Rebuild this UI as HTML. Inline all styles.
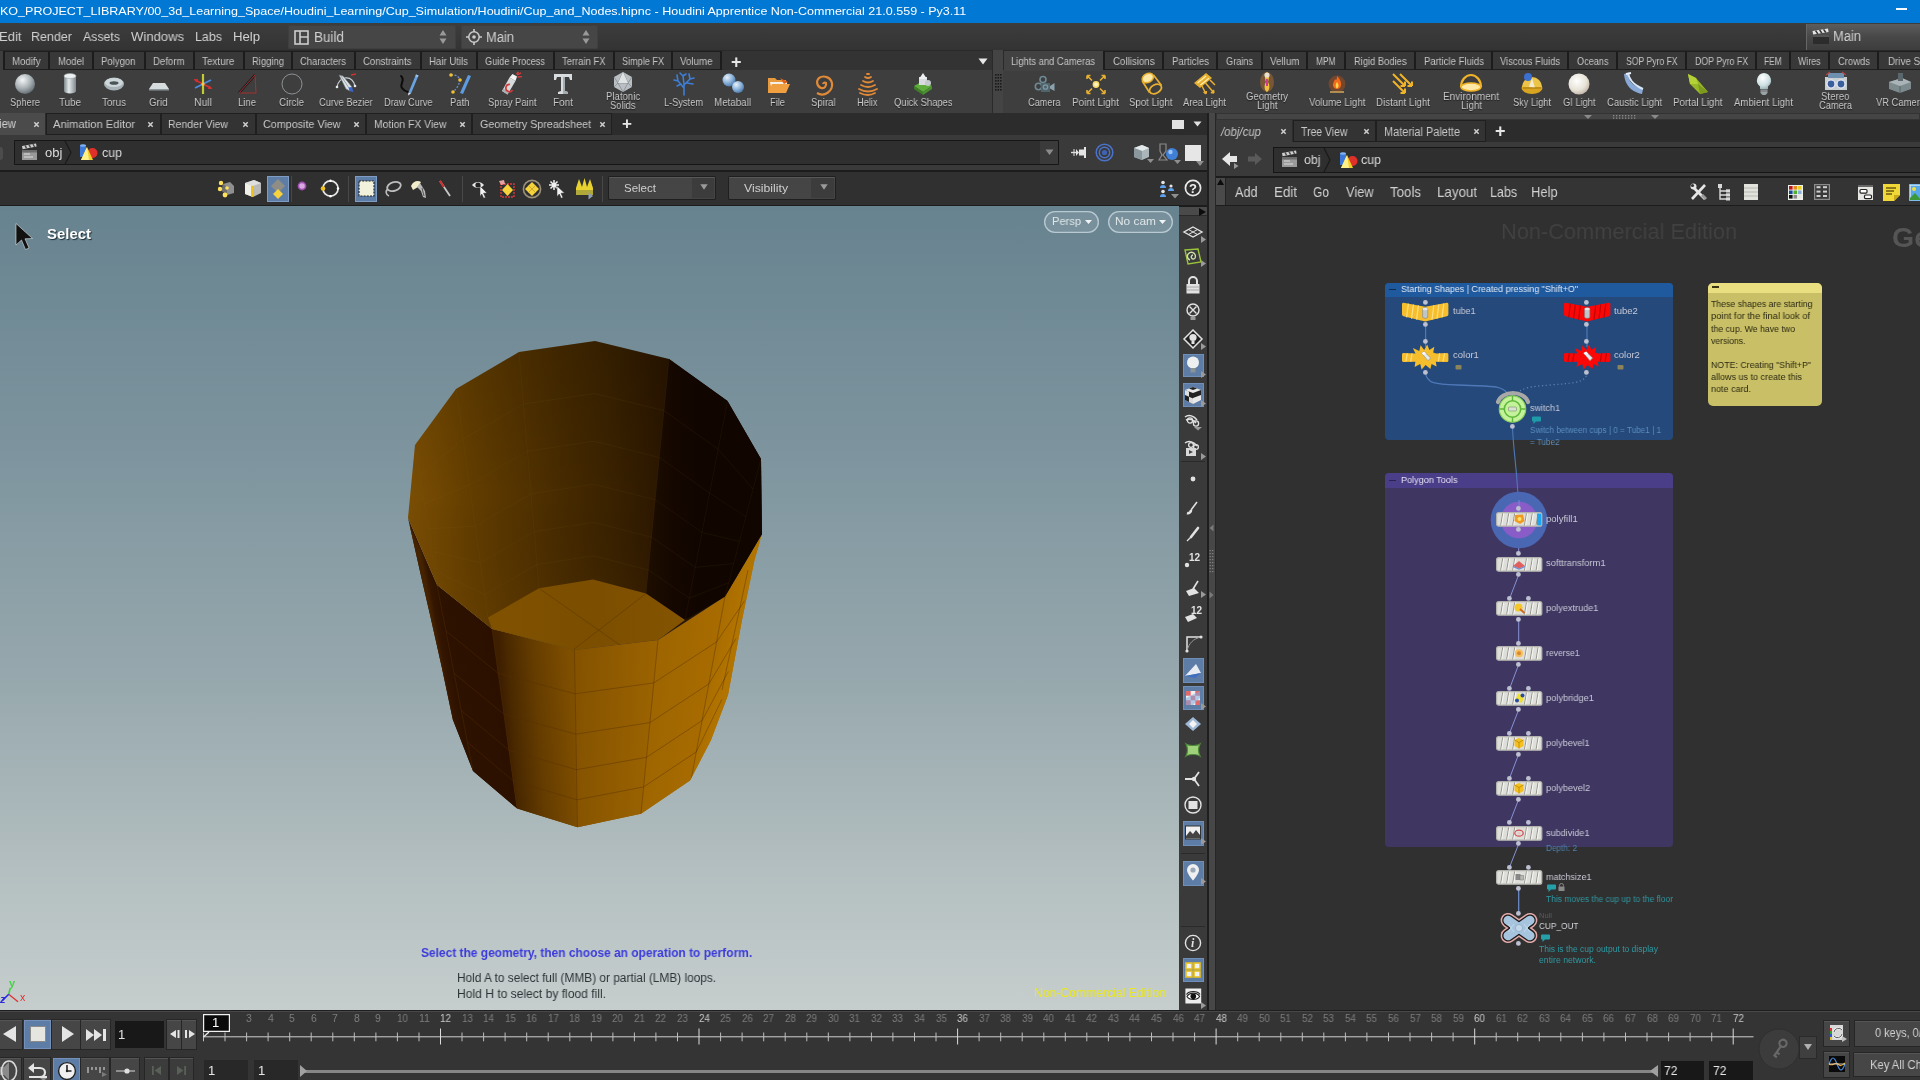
<!DOCTYPE html>
<html><head><meta charset="utf-8"><title>Houdini</title>
<style>
html,body{margin:0;padding:0;background:#2f2f2f;}
body{width:1920px;height:1080px;position:relative;overflow:hidden;font-family:"Liberation Sans",sans-serif;}
.r{position:absolute;display:block;}
svg.r{overflow:visible;}
.t{position:absolute;white-space:nowrap;transform-origin:0 50%;will-change:transform;}
</style></head><body>
<!-- top -->
<div class="r" style="left:0px;top:0px;width:1920px;height:23px;background:#0078d4;"></div>
<span class="t" style="left:0.0px;top:4.5px;font-size:11.2px;line-height:13px;color:#fff;transform:scaleX(1.120);">KO_PROJECT_LIBRARY/00_3d_Learning_Space/Houdini_Learning/Cup_Simulation/Houdini/Cup_and_Nodes.hipnc - Houdini Apprentice Non-Commercial 21.0.559 - Py3.11</span>
<div class="r" style="left:1896px;top:8px;width:11px;height:1.6px;background:#f4faff;"></div>
<div class="r" style="left:0px;top:23px;width:1920px;height:27px;background:linear-gradient(180deg,#3d3d3d,#333333);"></div>
<span class="t" style="left:-1.5px;top:29.0px;font-size:13.2px;line-height:16px;color:#d0d0d0;transform:scaleX(0.989);">Edit</span>
<span class="t" style="left:31.0px;top:29.0px;font-size:13.2px;line-height:16px;color:#d0d0d0;transform:scaleX(0.947);">Render</span>
<span class="t" style="left:83.0px;top:29.0px;font-size:13.2px;line-height:16px;color:#d0d0d0;transform:scaleX(0.934);">Assets</span>
<span class="t" style="left:131.0px;top:29.0px;font-size:13.2px;line-height:16px;color:#d0d0d0;transform:scaleX(0.990);">Windows</span>
<span class="t" style="left:195.0px;top:29.0px;font-size:13.2px;line-height:16px;color:#d0d0d0;transform:scaleX(0.943);">Labs</span>
<span class="t" style="left:233.0px;top:29.0px;font-size:13.2px;line-height:16px;color:#d0d0d0;transform:scaleX(0.995);">Help</span>
<div class="r" style="left:288px;top:25px;width:168px;height:24px;background:#464646;border-radius:2px;box-shadow:inset 0 0 0 1px #3f3f3f;"></div>
<svg class="r" style="left:294px;top:30px;" width="15" height="15" viewBox="0 0 15 15"><rect x="1" y="1" width="13" height="13" fill="none" stroke="#ccc" stroke-width="1.6"/><path d="M6 1V14M6 7H14" stroke="#ccc" stroke-width="1.6" fill="none"/></svg>
<span class="t" style="left:314.0px;top:28.5px;font-size:14px;line-height:17px;color:#d0d0d0;transform:scaleX(0.964);">Build</span>
<svg class="r" style="left:439px;top:29px;" width="8" height="16" viewBox="0 0 8 16"><path d="M4 1L7.5 6.5H0.5Z M4 15L7.5 9.5H0.5Z" fill="#999"/></svg>
<div class="r" style="left:461px;top:25px;width:137px;height:24px;background:#464646;border-radius:2px;box-shadow:inset 0 0 0 1px #3f3f3f;"></div>
<svg class="r" style="left:466px;top:29px;" width="16" height="16" viewBox="0 0 16 16"><circle cx="8" cy="8" r="5.2" fill="none" stroke="#ccc" stroke-width="1.5"/><circle cx="8" cy="8" r="1.8" fill="#ccc"/><path d="M8 0V3M8 13V16M0 8H3M13 8H16" stroke="#ccc" stroke-width="1.6"/></svg>
<span class="t" style="left:486.0px;top:28.5px;font-size:14px;line-height:17px;color:#d0d0d0;transform:scaleX(0.923);">Main</span>
<svg class="r" style="left:582px;top:29px;" width="8" height="16" viewBox="0 0 8 16"><path d="M4 1L7.5 6.5H0.5Z M4 15L7.5 9.5H0.5Z" fill="#999"/></svg>
<div class="r" style="left:1806px;top:23.5px;width:114px;height:26px;background:linear-gradient(180deg,#5c5c5c,#484848 50%,#3d3d3d);box-shadow:inset 1px 0 0 #666;"></div>
<svg class="r" style="left:1812px;top:28px;" width="18" height="16" viewBox="0 0 18 16"><path d="M1 7H17V16H1Z" fill="#2c2c2c"/><path d="M1 7H17V9H1Z" fill="#555"/><path d="M0.5 3L16 0.5L16.6 4L1.2 6.5Z" fill="#e4e4e4"/><path d="M3.6 2.6L5.8 5.8M7.6 2L9.8 5.2M11.6 1.3L13.8 4.5" stroke="#333" stroke-width="1.5"/></svg>
<span class="t" style="left:1833.0px;top:27.5px;font-size:14px;line-height:17px;color:#d0d0d0;transform:scaleX(0.923);">Main</span>
<div class="r" style="left:0px;top:50px;width:1920px;height:21px;background:#2a2a2a;"></div>
<div class="r" style="left:0px;top:70px;width:1920px;height:43px;background:#3e3e3e;"></div>
<div class="r" style="left:0px;top:51px;width:3px;height:19px;background:#3e3e3e;"></div>
<div class="r" style="left:5px;top:51px;width:716px;height:19px;background:#383838;box-shadow:inset 0 1px 0 #1e1e1e, inset 0 -1px 0 #1e1e1e;"></div>
<div class="r" style="left:3.2px;top:51px;width:1.6px;height:19px;background:#1c1c1c;"></div>
<span class="t" style="left:12.2px;top:54.5px;font-size:10.5px;line-height:13px;color:#c4c4c4;transform:scaleX(0.922);">Modify</span>
<div class="r" style="left:48.2px;top:51px;width:1.6px;height:19px;background:#1c1c1c;"></div>
<span class="t" style="left:57.5px;top:54.5px;font-size:10.5px;line-height:13px;color:#c4c4c4;transform:scaleX(0.909);">Model</span>
<div class="r" style="left:92.2px;top:51px;width:1.6px;height:19px;background:#1c1c1c;"></div>
<span class="t" style="left:101.2px;top:54.5px;font-size:10.5px;line-height:13px;color:#c4c4c4;transform:scaleX(0.909);">Polygon</span>
<div class="r" style="left:144.2px;top:51px;width:1.6px;height:19px;background:#1c1c1c;"></div>
<span class="t" style="left:153.2px;top:54.5px;font-size:10.5px;line-height:13px;color:#c4c4c4;transform:scaleX(0.915);">Deform</span>
<div class="r" style="left:193.2px;top:51px;width:1.6px;height:19px;background:#1c1c1c;"></div>
<span class="t" style="left:201.6px;top:54.5px;font-size:10.5px;line-height:13px;color:#c4c4c4;transform:scaleX(0.944);">Texture</span>
<div class="r" style="left:243.2px;top:51px;width:1.6px;height:19px;background:#1c1c1c;"></div>
<span class="t" style="left:251.5px;top:54.5px;font-size:10.5px;line-height:13px;color:#c4c4c4;transform:scaleX(0.899);">Rigging</span>
<div class="r" style="left:291.2px;top:51px;width:1.6px;height:19px;background:#1c1c1c;"></div>
<span class="t" style="left:300.0px;top:54.5px;font-size:10.5px;line-height:13px;color:#c4c4c4;transform:scaleX(0.896);">Characters</span>
<div class="r" style="left:354.2px;top:51px;width:1.6px;height:19px;background:#1c1c1c;"></div>
<span class="t" style="left:363.2px;top:54.5px;font-size:10.5px;line-height:13px;color:#c4c4c4;transform:scaleX(0.913);">Constraints</span>
<div class="r" style="left:420.2px;top:51px;width:1.6px;height:19px;background:#1c1c1c;"></div>
<span class="t" style="left:429.0px;top:54.5px;font-size:10.5px;line-height:13px;color:#c4c4c4;transform:scaleX(0.916);">Hair Utils</span>
<div class="r" style="left:476.2px;top:51px;width:1.6px;height:19px;background:#1c1c1c;"></div>
<span class="t" style="left:485.0px;top:54.5px;font-size:10.5px;line-height:13px;color:#c4c4c4;transform:scaleX(0.871);">Guide Process</span>
<div class="r" style="left:553.2px;top:51px;width:1.6px;height:19px;background:#1c1c1c;"></div>
<span class="t" style="left:562.0px;top:54.5px;font-size:10.5px;line-height:13px;color:#c4c4c4;transform:scaleX(0.898);">Terrain FX</span>
<div class="r" style="left:613.2px;top:51px;width:1.6px;height:19px;background:#1c1c1c;"></div>
<span class="t" style="left:621.5px;top:54.5px;font-size:10.5px;line-height:13px;color:#c4c4c4;transform:scaleX(0.867);">Simple FX</span>
<div class="r" style="left:671.2px;top:51px;width:1.6px;height:19px;background:#1c1c1c;"></div>
<span class="t" style="left:680.2px;top:54.5px;font-size:10.5px;line-height:13px;color:#c4c4c4;transform:scaleX(0.928);">Volume</span>
<div class="r" style="left:720.2px;top:51px;width:1.6px;height:19px;background:#1c1c1c;"></div>
<span class="t" style="left:731.3px;top:51.5px;font-size:16px;line-height:19px;color:#ddd;font-weight:bold;">+</span>
<div class="r" style="left:722px;top:51px;width:270px;height:19px;background:#333;"></div>
<span class="t" style="left:730.7px;top:50.5px;font-size:18px;line-height:22px;color:#e6e6e6;font-weight:bold;">+</span>
<svg class="r" style="left:978px;top:58px;" width="10" height="7" viewBox="0 0 10 7"><path d="M0.5 0.5H9.5L5 6.5Z" fill="#e8e8e8"/></svg>
<div class="r" style="left:992px;top:50px;width:11px;height:63px;background:#444;"></div>
<div class="r" style="left:992px;top:50px;width:1px;height:63px;background:#2a2a2a;"></div>
<svg class="r" style="left:995px;top:74px;" width="7" height="17" viewBox="0 0 7 17"><rect x="0" y="0" width="1.6" height="1.6" fill="#1a1a1a"/><rect x="0" y="3" width="1.6" height="1.6" fill="#1a1a1a"/><rect x="0" y="6" width="1.6" height="1.6" fill="#1a1a1a"/><rect x="0" y="9" width="1.6" height="1.6" fill="#1a1a1a"/><rect x="0" y="12" width="1.6" height="1.6" fill="#1a1a1a"/><rect x="0" y="15" width="1.6" height="1.6" fill="#1a1a1a"/><rect x="2.5" y="0" width="1.6" height="1.6" fill="#1a1a1a"/><rect x="2.5" y="3" width="1.6" height="1.6" fill="#1a1a1a"/><rect x="2.5" y="6" width="1.6" height="1.6" fill="#1a1a1a"/><rect x="2.5" y="9" width="1.6" height="1.6" fill="#1a1a1a"/><rect x="2.5" y="12" width="1.6" height="1.6" fill="#1a1a1a"/><rect x="2.5" y="15" width="1.6" height="1.6" fill="#1a1a1a"/><rect x="5" y="0" width="1.6" height="1.6" fill="#1a1a1a"/><rect x="5" y="3" width="1.6" height="1.6" fill="#1a1a1a"/><rect x="5" y="6" width="1.6" height="1.6" fill="#1a1a1a"/><rect x="5" y="9" width="1.6" height="1.6" fill="#1a1a1a"/><rect x="5" y="12" width="1.6" height="1.6" fill="#1a1a1a"/><rect x="5" y="15" width="1.6" height="1.6" fill="#1a1a1a"/></svg>
<div class="r" style="left:1103px;top:51px;width:817px;height:19px;background:#383838;box-shadow:inset 0 1px 0 #1e1e1e, inset 0 -1px 0 #1e1e1e;"></div>
<div class="r" style="left:1004px;top:51px;width:99px;height:20px;background:#424242;"></div>
<span class="t" style="left:1010.5px;top:54.5px;font-size:10.5px;line-height:13px;color:#c4c4c4;transform:scaleX(0.894);">Lights and Cameras</span>
<div class="r" style="left:1103.2px;top:51px;width:1.6px;height:19px;background:#1c1c1c;"></div>
<span class="t" style="left:1112.8px;top:54.5px;font-size:10.5px;line-height:13px;color:#c4c4c4;transform:scaleX(0.924);">Collisions</span>
<div class="r" style="left:1162.2px;top:51px;width:1.6px;height:19px;background:#1c1c1c;"></div>
<span class="t" style="left:1171.5px;top:54.5px;font-size:10.5px;line-height:13px;color:#c4c4c4;transform:scaleX(0.919);">Particles</span>
<div class="r" style="left:1216.2px;top:51px;width:1.6px;height:19px;background:#1c1c1c;"></div>
<span class="t" style="left:1226.0px;top:54.5px;font-size:10.5px;line-height:13px;color:#c4c4c4;transform:scaleX(0.873);">Grains</span>
<div class="r" style="left:1261.2px;top:51px;width:1.6px;height:19px;background:#1c1c1c;"></div>
<span class="t" style="left:1269.8px;top:54.5px;font-size:10.5px;line-height:13px;color:#c4c4c4;transform:scaleX(0.936);">Vellum</span>
<div class="r" style="left:1306.2px;top:51px;width:1.6px;height:19px;background:#1c1c1c;"></div>
<span class="t" style="left:1316.2px;top:54.5px;font-size:10.5px;line-height:13px;color:#c4c4c4;transform:scaleX(0.796);">MPM</span>
<div class="r" style="left:1344.2px;top:51px;width:1.6px;height:19px;background:#1c1c1c;"></div>
<span class="t" style="left:1353.8px;top:54.5px;font-size:10.5px;line-height:13px;color:#c4c4c4;transform:scaleX(0.891);">Rigid Bodies</span>
<div class="r" style="left:1414.2px;top:51px;width:1.6px;height:19px;background:#1c1c1c;"></div>
<span class="t" style="left:1423.5px;top:54.5px;font-size:10.5px;line-height:13px;color:#c4c4c4;transform:scaleX(0.910);">Particle Fluids</span>
<div class="r" style="left:1491.2px;top:51px;width:1.6px;height:19px;background:#1c1c1c;"></div>
<span class="t" style="left:1500.0px;top:54.5px;font-size:10.5px;line-height:13px;color:#c4c4c4;transform:scaleX(0.889);">Viscous Fluids</span>
<div class="r" style="left:1567.2px;top:51px;width:1.6px;height:19px;background:#1c1c1c;"></div>
<span class="t" style="left:1576.8px;top:54.5px;font-size:10.5px;line-height:13px;color:#c4c4c4;transform:scaleX(0.871);">Oceans</span>
<div class="r" style="left:1616.2px;top:51px;width:1.6px;height:19px;background:#1c1c1c;"></div>
<span class="t" style="left:1625.8px;top:54.5px;font-size:10.5px;line-height:13px;color:#c4c4c4;transform:scaleX(0.820);">SOP Pyro FX</span>
<div class="r" style="left:1685.2px;top:51px;width:1.6px;height:19px;background:#1c1c1c;"></div>
<span class="t" style="left:1694.5px;top:54.5px;font-size:10.5px;line-height:13px;color:#c4c4c4;transform:scaleX(0.836);">DOP Pyro FX</span>
<div class="r" style="left:1755.2px;top:51px;width:1.6px;height:19px;background:#1c1c1c;"></div>
<span class="t" style="left:1764.2px;top:54.5px;font-size:10.5px;line-height:13px;color:#c4c4c4;transform:scaleX(0.790);">FEM</span>
<div class="r" style="left:1789.2px;top:51px;width:1.6px;height:19px;background:#1c1c1c;"></div>
<span class="t" style="left:1798.2px;top:54.5px;font-size:10.5px;line-height:13px;color:#c4c4c4;transform:scaleX(0.839);">Wires</span>
<div class="r" style="left:1828.2px;top:51px;width:1.6px;height:19px;background:#1c1c1c;"></div>
<span class="t" style="left:1837.5px;top:54.5px;font-size:10.5px;line-height:13px;color:#c4c4c4;transform:scaleX(0.899);">Crowds</span>
<div class="r" style="left:1877.2px;top:51px;width:1.6px;height:19px;background:#1c1c1c;"></div>
<span class="t" style="left:1887.5px;top:54.5px;font-size:10.5px;line-height:13px;color:#c4c4c4;transform:scaleX(0.930);">Drive Simulation</span>
<!-- shelf -->
<svg width="0" height="0" style="position:absolute"><defs>
<radialGradient id="gsph" cx=".38" cy=".3" r=".75"><stop offset="0" stop-color="#f4f6f7"/><stop offset=".55" stop-color="#a9b1b5"/><stop offset="1" stop-color="#5f686d"/></radialGradient>
<linearGradient id="gtube" x1="0" x2="1"><stop offset="0" stop-color="#7d888c"/><stop offset=".4" stop-color="#e4e9ea"/><stop offset="1" stop-color="#7d888c"/></linearGradient>
<radialGradient id="gmeta" cx=".35" cy=".3" r=".8"><stop offset="0" stop-color="#e8f2fb"/><stop offset=".5" stop-color="#8fb5dc"/><stop offset="1" stop-color="#3f6fa3"/></radialGradient>
<radialGradient id="ggi" cx=".4" cy=".35" r=".75"><stop offset="0" stop-color="#fff"/><stop offset=".6" stop-color="#e6e2d6"/><stop offset="1" stop-color="#b9a59a"/></radialGradient>
<radialGradient id="gbulb" cx=".4" cy=".3" r=".8"><stop offset="0" stop-color="#fff"/><stop offset=".6" stop-color="#cfe0e2"/><stop offset="1" stop-color="#8fa6aa"/></radialGradient>
</defs></svg>
<svg class="r" style="left:13px;top:72px;" width="24" height="24" viewBox="0 0 24 24"><circle cx="12" cy="12" r="10" fill="url(#gsph)"/></svg>
<span class="t" style="left:10.0px;top:95.5px;font-size:11px;line-height:13px;color:#c8c8c8;transform:scaleX(0.846);text-shadow:0 1px 1px #1c1c1c;">Sphere</span>
<svg class="r" style="left:57.5px;top:72px;" width="24" height="24" viewBox="0 0 24 24"><path d="M6 4V19A6 2.5 0 0 0 18 19V4Z" fill="url(#gtube)"/><ellipse cx="12" cy="4" rx="6" ry="2.5" fill="#eef1f2" stroke="#9aa4a8" stroke-width=".6"/></svg>
<span class="t" style="left:58.5px;top:95.5px;font-size:11px;line-height:13px;color:#c8c8c8;transform:scaleX(0.892);text-shadow:0 1px 1px #1c1c1c;">Tube</span>
<svg class="r" style="left:102px;top:72px;" width="24" height="24" viewBox="0 0 24 24"><ellipse cx="12" cy="12" rx="10" ry="6.5" fill="#a7b3b8"/><ellipse cx="12" cy="10.5" rx="9" ry="4.5" fill="#cdd6d9"/><ellipse cx="12" cy="11" rx="4.5" ry="1.8" fill="#4a5458"/></svg>
<span class="t" style="left:102.0px;top:95.5px;font-size:11px;line-height:13px;color:#c8c8c8;transform:scaleX(0.892);text-shadow:0 1px 1px #1c1c1c;">Torus</span>
<svg class="r" style="left:146.5px;top:72px;" width="24" height="24" viewBox="0 0 24 24"><path d="M6 11H18L22 17H2Z" fill="#d7dcde"/><path d="M2 17H22V18.5H2Z" fill="#8d979b"/></svg>
<span class="t" style="left:149.2px;top:95.5px;font-size:11px;line-height:13px;color:#c8c8c8;transform:scaleX(0.890);text-shadow:0 1px 1px #1c1c1c;">Grid</span>
<svg class="r" style="left:191px;top:72px;" width="24" height="24" viewBox="0 0 24 24"><path d="M4 8L20 16" stroke="#d83030" stroke-width="1.8"/><path d="M4 16L20 8" stroke="#4c8be0" stroke-width="1.8"/><path d="M12 2V22" stroke="#c2cc30" stroke-width="2.2"/><path d="M18 13.5L21.5 16.8L17 17Z" fill="#d83030"/><path d="M6 10.5L2.5 7.2L7 7Z" fill="#d83030"/><circle cx="12" cy="12" r="1.6" fill="#f4c848"/></svg>
<span class="t" style="left:194.0px;top:95.5px;font-size:11px;line-height:13px;color:#c8c8c8;transform:scaleX(0.950);text-shadow:0 1px 1px #1c1c1c;">Null</span>
<svg class="r" style="left:235px;top:72px;" width="24" height="24" viewBox="0 0 24 24"><path d="M4 21L20 3" stroke="#1c1c1c" stroke-width="2.6"/><path d="M4 21L20 3M4 21H21L20 3" stroke="#b03030" stroke-width=".9" fill="none"/></svg>
<span class="t" style="left:238.0px;top:95.5px;font-size:11px;line-height:13px;color:#c8c8c8;transform:scaleX(0.866);text-shadow:0 1px 1px #1c1c1c;">Line</span>
<svg class="r" style="left:279.5px;top:72px;" width="24" height="24" viewBox="0 0 24 24"><circle cx="12" cy="12" r="10" fill="none" stroke="#8a8f92" stroke-width="1"/></svg>
<span class="t" style="left:279.0px;top:95.5px;font-size:11px;line-height:13px;color:#c8c8c8;transform:scaleX(0.889);text-shadow:0 1px 1px #1c1c1c;">Circle</span>
<svg class="r" style="left:334px;top:72px;" width="24" height="24" viewBox="0 0 24 24"><path d="M3 15C5 4 18 2 21 14" stroke="#c4ccd2" stroke-width="1.2" fill="none"/><path d="M5 3L9 4L18 15L16 19L12 17Z" fill="#dfe4e8" stroke="#6a7278" stroke-width=".6"/><path d="M7 4L15 16" stroke="#8a9298" stroke-width=".8"/><path d="M14.5 15.5L18 15L19.5 20L15.5 19Z" fill="#3a66d0"/><path d="M17 3L22 2" stroke="#d03030" stroke-width="1.3"/><circle cx="3" cy="15" r="1.3" fill="#e8ecf0"/><circle cx="21" cy="14" r="1.3" fill="#e8ecf0"/></svg>
<span class="t" style="left:319.2px;top:95.5px;font-size:11px;line-height:13px;color:#c8c8c8;transform:scaleX(0.842);text-shadow:0 1px 1px #1c1c1c;">Curve Bezier</span>
<svg class="r" style="left:396px;top:72px;" width="24" height="24" viewBox="0 0 24 24"><path d="M5 4C10 8 3 12 6 16C8 19 10 19.5 12 20" stroke="#0c0c0c" stroke-width="2" fill="none" stroke-linecap="round"/><path d="M12.5 20.5L20 2.5L22.5 3.5L15 21.5Z" fill="#6aa2e2"/><path d="M12.5 20.5L15 21.5L12 23.5Z" fill="#e4e4e4"/><path d="M20 2.5L22.5 3.5L21.8 5.2L19.3 4.2Z" fill="#9cc4f0"/></svg>
<span class="t" style="left:383.8px;top:95.5px;font-size:11px;line-height:13px;color:#c8c8c8;transform:scaleX(0.835);text-shadow:0 1px 1px #1c1c1c;">Draw Curve</span>
<svg class="r" style="left:447.5px;top:72px;" width="24" height="24" viewBox="0 0 24 24"><path d="M3 3C14 2 14 12 5 20" stroke="#6a8fd0" stroke-width="1.2" fill="none" stroke-dasharray="2 1.5"/><path d="M12 21L20 3L23 4L15 22Z" fill="#5d9ce0"/><circle cx="3" cy="3" r="1.8" fill="#f0c030"/><circle cx="12" cy="8" r="1.8" fill="#f0c030"/><circle cx="5" cy="20" r="1.8" fill="#f0c030"/></svg>
<span class="t" style="left:449.8px;top:95.5px;font-size:11px;line-height:13px;color:#c8c8c8;transform:scaleX(0.862);text-shadow:0 1px 1px #1c1c1c;">Path</span>
<svg class="r" style="left:500px;top:72px;" width="24" height="24" viewBox="0 0 24 24"><path d="M7.5 22.5L2 19L9.5 5.5L15.5 9Z" fill="#d6dadc"/><path d="M7.5 22.5L2 19L3.5 16.5L9 20Z" fill="#aab0b4"/><path d="M9.5 5.5L12.5 2L17 4.5L15.5 9Z" fill="#f4f4f4"/><path d="M10 12.5A3.6 3.6 0 1 0 12.5 18" stroke="#d23a3a" stroke-width="1.7" fill="none"/><path d="M17 3L21 0.8M17.5 5L22 4.6M16.5 2L18.5 0" stroke="#e03a3a" stroke-width="1.4"/></svg>
<span class="t" style="left:487.8px;top:95.5px;font-size:11px;line-height:13px;color:#c8c8c8;transform:scaleX(0.853);text-shadow:0 1px 1px #1c1c1c;">Spray Paint</span>
<svg class="r" style="left:551px;top:72px;" width="24" height="24" viewBox="0 0 24 24"><path d="M3 2H21V8H19L18 5H14V19L17 20V22H7V20L10 19V5H6L5 8H3Z" fill="#d9dcde"/><path d="M14 5V19L17 20V22H12V5Z" fill="#a4acb0"/></svg>
<span class="t" style="left:553.0px;top:95.5px;font-size:11px;line-height:13px;color:#c8c8c8;transform:scaleX(0.909);text-shadow:0 1px 1px #1c1c1c;">Font</span>
<svg class="r" style="left:671.5px;top:72px;" width="24" height="24" viewBox="0 0 24 24"><path d="M12 23V12M12 16L6 9M12 13L18 7M6 9L2 8M6 9L5 3M18 7L17 2M18 7L22 6M12 12L11 4M11 4L8 1M11 4L14 2M9 12L5 14M15 11L21 12" stroke="#3d7fd6" stroke-width="1.6" fill="none" stroke-linecap="round"/></svg>
<span class="t" style="left:664.0px;top:95.5px;font-size:11px;line-height:13px;color:#c8c8c8;transform:scaleX(0.840);text-shadow:0 1px 1px #1c1c1c;">L-System</span>
<svg class="r" style="left:720.5px;top:72px;" width="24" height="24" viewBox="0 0 24 24"><circle cx="8" cy="8" r="6.5" fill="url(#gmeta)"/><circle cx="17" cy="15" r="6" fill="url(#gmeta)"/></svg>
<span class="t" style="left:714.0px;top:95.5px;font-size:11px;line-height:13px;color:#c8c8c8;transform:scaleX(0.890);text-shadow:0 1px 1px #1c1c1c;">Metaball</span>
<svg class="r" style="left:765.5px;top:72px;" width="24" height="24" viewBox="0 0 24 24"><path d="M2 6H9L11 8H20V21H2Z" fill="#e89a3c"/><path d="M4 10H21V19H6Z" fill="#f4f0e6"/><path d="M2 21L6 12H24L20 21Z" fill="#f0a040"/><path d="M14 6L22 10L18 12Z" fill="#e06018"/></svg>
<span class="t" style="left:770.0px;top:95.5px;font-size:11px;line-height:13px;color:#c8c8c8;transform:scaleX(0.846);text-shadow:0 1px 1px #1c1c1c;">File</span>
<svg class="r" style="left:811px;top:72px;" width="24" height="24" viewBox="0 0 24 24"><path d="M12 12A2 2 0 0 1 15 11A4 4 0 0 1 10 16A6 6 0 0 1 8 6A8.5 8.5 0 0 1 21 11A10 10 0 0 1 6 21" stroke="#e08a38" stroke-width="2.2" fill="none"/></svg>
<span class="t" style="left:810.8px;top:95.5px;font-size:11px;line-height:13px;color:#c8c8c8;transform:scaleX(0.871);text-shadow:0 1px 1px #1c1c1c;">Spiral</span>
<svg class="r" style="left:855.5px;top:72px;" width="24" height="24" viewBox="0 0 24 24"><path d="M11 2H13M9 5Q12 7 15 5M7 9Q12 12 17 9M5 13Q12 17 19 13M3 17Q12 22 21 17M4 21Q12 25 19 21" stroke="#e08a38" stroke-width="1.8" fill="none" stroke-linecap="round"/></svg>
<span class="t" style="left:857.2px;top:95.5px;font-size:11px;line-height:13px;color:#c8c8c8;transform:scaleX(0.838);text-shadow:0 1px 1px #1c1c1c;">Helix</span>
<svg class="r" style="left:911px;top:72px;" width="24" height="24" viewBox="0 0 24 24"><path d="M3 14L12 9L21 14L12 20Z" fill="#5fae3c"/><path d="M3 14V17L12 23V20Z" fill="#3f7f28"/><path d="M21 14V17L12 23V20Z" fill="#4a9030"/><path d="M8 5H16V13H8Z" fill="#d8dcde"/><path d="M12 1L16 7H8Z" fill="#eef0f1"/><circle cx="17" cy="11" r="3" fill="#c4cacc"/></svg>
<span class="t" style="left:893.8px;top:95.5px;font-size:11px;line-height:13px;color:#c8c8c8;transform:scaleX(0.854);text-shadow:0 1px 1px #1c1c1c;">Quick Shapes</span>
<svg class="r" style="left:611px;top:70px;" width="24" height="24" viewBox="0 0 24 24"><path d="M12 2L21 7V17L12 22L3 17V7Z" fill="#b9bfc2"/><path d="M12 2L7 13H17ZM7 13L3 7M17 13L21 7M7 13L12 22L17 13M7 13L3 17M17 13L21 17" stroke="#858c90" stroke-width=".8" fill="none"/><path d="M12 2L7 13H17Z" fill="#dfe3e4"/></svg>
<span class="t" style="left:606.0px;top:90.0px;font-size:11px;line-height:13px;color:#c8c8c8;transform:scaleX(0.869);text-shadow:0 1px 1px #1c1c1c;">Platonic</span>
<span class="t" style="left:610.2px;top:99.0px;font-size:11px;line-height:13px;color:#c8c8c8;transform:scaleX(0.851);text-shadow:0 1px 1px #1c1c1c;">Solids</span>
<svg class="r" style="left:1032px;top:72px;" width="24" height="24" viewBox="0 0 24 24"><circle cx="11" cy="7.5" r="3" fill="none" stroke="#6f8a94" stroke-width="1.6"/><circle cx="6.5" cy="14.5" r="3.2" fill="none" stroke="#6f8a94" stroke-width="1.6"/><path d="M9 11H18V20H9Z" fill="#50646c"/><circle cx="13.5" cy="15" r="2.2" fill="none" stroke="#7e98a2" stroke-width="1.3"/><path d="M18 14L22.5 11V19L18 16.5Z" fill="#8aa2ac"/></svg>
<span class="t" style="left:1027.8px;top:95.5px;font-size:11px;line-height:13px;color:#c8c8c8;transform:scaleX(0.831);text-shadow:0 1px 1px #1c1c1c;">Camera</span>
<svg class="r" style="left:1083.5px;top:72px;" width="24" height="24" viewBox="0 0 24 24"><circle cx="12" cy="12.5" r="3.4" fill="#f8d868"/><circle cx="12" cy="12.5" r="1.9" fill="#fff4c0"/><path d="M8 8.5L3 3.5M3 3.5H6.5M3 3.5V7M16 8.5L21 3.5M21 3.5H17.5M21 3.5V7M8 16.5L3 21.5M3 21.5H6.5M3 21.5V18M16 16.5L21 21.5M21 21.5H17.5M21 21.5V18" stroke="#e8b030" stroke-width="1.6" fill="none"/></svg>
<span class="t" style="left:1072.0px;top:95.5px;font-size:11px;line-height:13px;color:#c8c8c8;transform:scaleX(0.904);text-shadow:0 1px 1px #1c1c1c;">Point Light</span>
<svg class="r" style="left:1139px;top:72px;" width="24" height="24" viewBox="0 0 24 24"><path d="M3.2 9L10.5 20.5M14.5 3L22.5 13.5" stroke="#e8b030" stroke-width="1.7"/><ellipse cx="8.8" cy="6" rx="6" ry="4.4" transform="rotate(-28 8.8 6)" fill="#fbe7a6" stroke="#e8b030" stroke-width="1.5"/><ellipse cx="16.5" cy="17" rx="6.4" ry="4.2" transform="rotate(-28 16.5 17)" fill="none" stroke="#e8b030" stroke-width="1.7"/></svg>
<span class="t" style="left:1129.2px;top:95.5px;font-size:11px;line-height:13px;color:#c8c8c8;transform:scaleX(0.878);text-shadow:0 1px 1px #1c1c1c;">Spot Light</span>
<svg class="r" style="left:1192.5px;top:72px;" width="24" height="24" viewBox="0 0 24 24"><path d="M1 11L13 1L19 6L7 16Z" fill="#e8b030"/><path d="M4.5 11L13 4M7.5 13L16 6.2" stroke="#fff0b0" stroke-width="1.2"/><path d="M9 14L13 22M12.5 11L21 21M13 22L10.6 20M13 22L13.4 19M21 21L17.8 20.4M21 21L20.4 17.8M17 8L22 13" stroke="#e8b030" stroke-width="1.5" fill="none"/></svg>
<span class="t" style="left:1183.0px;top:95.5px;font-size:11px;line-height:13px;color:#c8c8c8;transform:scaleX(0.858);text-shadow:0 1px 1px #1c1c1c;">Area Light</span>
<svg class="r" style="left:1325px;top:72px;" width="24" height="24" viewBox="0 0 24 24"><circle cx="12" cy="12" r="8.5" fill="#8a4a28" opacity=".7"/><path d="M12 4C16 8 17 12 15.5 15A4 4 0 0 1 8.5 15C7 12 9 10 10 7C11 9 12 8 12 4Z" fill="#f36a1c"/><path d="M12 10C14 12 14 15 12 16.5C10 15 10.5 12 12 10Z" fill="#ffd84a"/><path d="M5 20H19" stroke="#caa25a" stroke-width="1.6"/></svg>
<span class="t" style="left:1308.8px;top:95.5px;font-size:11px;line-height:13px;color:#c8c8c8;transform:scaleX(0.888);text-shadow:0 1px 1px #1c1c1c;">Volume Light</span>
<svg class="r" style="left:1390.5px;top:72px;" width="24" height="24" viewBox="0 0 24 24"><path d="M2 2L14 14M9 2L21 14M2 9L14 21" stroke="#f0b428" stroke-width="2"/><path d="M14 14V9.5M14 14H9.5M21 14V9.5M21 14H16.5M14 21V16.5M14 21H9.5" stroke="#f0b428" stroke-width="2" fill="none"/></svg>
<span class="t" style="left:1375.5px;top:95.5px;font-size:11px;line-height:13px;color:#c8c8c8;transform:scaleX(0.883);text-shadow:0 1px 1px #1c1c1c;">Distant Light</span>
<svg class="r" style="left:1520px;top:72px;" width="24" height="24" viewBox="0 0 24 24"><ellipse cx="12" cy="16" rx="10.5" ry="6" fill="#d9a520"/><path d="M2 15A10 10 0 0 1 22 15Z" fill="#ecc548"/><circle cx="8" cy="5" r="4" fill="#3b6fd0"/><path d="M12 6L15 16L9 15Z" fill="#f4ead0"/><path d="M3 16L21 16" stroke="#b07d10" stroke-width="1.2"/></svg>
<span class="t" style="left:1513.0px;top:95.5px;font-size:11px;line-height:13px;color:#c8c8c8;transform:scaleX(0.840);text-shadow:0 1px 1px #1c1c1c;">Sky Light</span>
<svg class="r" style="left:1567px;top:72px;" width="24" height="24" viewBox="0 0 24 24"><circle cx="12" cy="12" r="10.5" fill="url(#ggi)"/></svg>
<span class="t" style="left:1562.8px;top:95.5px;font-size:11px;line-height:13px;color:#c8c8c8;transform:scaleX(0.844);text-shadow:0 1px 1px #1c1c1c;">GI Light</span>
<svg class="r" style="left:1622.5px;top:72px;" width="24" height="24" viewBox="0 0 24 24"><path d="M5 1C5 8 8 13 20 17L19 22C8 20 2 13 1 2Z" fill="#88a8d8"/><path d="M5 1C6 7 9 12 20 17" stroke="#d8e6f6" stroke-width="2" fill="none"/><path d="M3 2L8 1" stroke="#e8f0fa" stroke-width="2"/></svg>
<span class="t" style="left:1607.0px;top:95.5px;font-size:11px;line-height:13px;color:#c8c8c8;transform:scaleX(0.865);text-shadow:0 1px 1px #1c1c1c;">Caustic Light</span>
<svg class="r" style="left:1686px;top:72px;" width="24" height="24" viewBox="0 0 24 24"><path d="M2 2L10 6L22 20L14 22L4 12Z" fill="#98b828"/><path d="M2 2L10 6L12 12L4 12Z" fill="#b4d238"/><path d="M12 12L22 20L14 22Z" fill="#7d9a1c"/></svg>
<span class="t" style="left:1673.2px;top:95.5px;font-size:11px;line-height:13px;color:#c8c8c8;transform:scaleX(0.890);text-shadow:0 1px 1px #1c1c1c;">Portal Light</span>
<svg class="r" style="left:1751.5px;top:72px;" width="24" height="24" viewBox="0 0 24 24"><path d="M12 1A7.5 7.5 0 0 1 16 14.5V17H8V14.5A7.5 7.5 0 0 1 12 1Z" fill="url(#gbulb)"/><path d="M8.5 17.5H15.5V21L13.5 23H10.5L8.5 21Z" fill="#9aa4a6"/><path d="M8.5 19H15.5" stroke="#666" stroke-width=".8"/></svg>
<span class="t" style="left:1734.0px;top:95.5px;font-size:11px;line-height:13px;color:#c8c8c8;transform:scaleX(0.877);text-shadow:0 1px 1px #1c1c1c;">Ambient Light</span>
<svg class="r" style="left:1255px;top:70px;" width="24" height="24" viewBox="0 0 24 24"><ellipse cx="12" cy="12" rx="7" ry="10" fill="#a86a30" opacity=".55"/><path d="M12 2C15 5 14 9 13 12C15 15 15 20 12 22C9 20 9 15 11 12C10 9 9 5 12 2Z" fill="#f0c040"/><circle cx="12" cy="5" r="2.6" fill="#e8e0d0"/><path d="M11 9H13V16H11Z" fill="#d03a8a"/></svg>
<span class="t" style="left:1246.0px;top:90.0px;font-size:11px;line-height:13px;color:#c8c8c8;transform:scaleX(0.870);text-shadow:0 1px 1px #1c1c1c;">Geometry</span>
<span class="t" style="left:1256.8px;top:99.0px;font-size:11px;line-height:13px;color:#c8c8c8;transform:scaleX(0.859);text-shadow:0 1px 1px #1c1c1c;">Light</span>
<svg class="r" style="left:1459px;top:70px;" width="24" height="24" viewBox="0 0 24 24"><path d="M2 17A10 12 0 0 1 22 17" fill="none" stroke="#f0b428" stroke-width="2.2"/><ellipse cx="12" cy="17" rx="10" ry="4" fill="#ffe9a8" stroke="#f0b428" stroke-width="1.6"/></svg>
<span class="t" style="left:1443.0px;top:90.0px;font-size:11px;line-height:13px;color:#c8c8c8;transform:scaleX(0.907);text-shadow:0 1px 1px #1c1c1c;">Environment</span>
<span class="t" style="left:1460.5px;top:99.0px;font-size:11px;line-height:13px;color:#c8c8c8;transform:scaleX(0.880);text-shadow:0 1px 1px #1c1c1c;">Light</span>
<svg class="r" style="left:1823.5px;top:70px;" width="24" height="24" viewBox="0 0 24 24"><path d="M1 7H23V20H1Z" fill="#c9ced0"/><path d="M4 3H20V8H4Z" fill="#6f8fae"/><circle cx="7" cy="14" r="4" fill="#3a5f9a" stroke="#eef" stroke-width="1.2"/><circle cx="17" cy="14" r="4" fill="#3a5f9a" stroke="#eef" stroke-width="1.2"/><path d="M2 5L6 2M22 5L18 2" stroke="#c04040" stroke-width="1.2"/></svg>
<span class="t" style="left:1821.2px;top:90.0px;font-size:11px;line-height:13px;color:#c8c8c8;transform:scaleX(0.879);text-shadow:0 1px 1px #1c1c1c;">Stereo</span>
<span class="t" style="left:1819.0px;top:99.0px;font-size:11px;line-height:13px;color:#c8c8c8;transform:scaleX(0.844);text-shadow:0 1px 1px #1c1c1c;">Camera</span>
<svg class="r" style="left:1888px;top:72px;" width="24" height="24" viewBox="0 0 24 24"><path d="M1 10L14 6L23 10V17L12 21L1 17Z" fill="#7d8a8e"/><path d="M1 10L12 14L23 10L14 6Z" fill="#aab4b8"/><path d="M10 1H15V9H10Z" fill="#5a676c"/><path d="M12 14V21" stroke="#566" stroke-width="1"/></svg>
<span class="t" style="left:1876.0px;top:95.5px;font-size:11px;line-height:13px;color:#c8c8c8;transform:scaleX(0.853);text-shadow:0 1px 1px #1c1c1c;">VR Camera</span>
<!-- leftpane -->
<div class="r" style="left:0px;top:113px;width:1207px;height:22px;background:#2c2c2c;"></div>
<div class="r" style="left:0px;top:113px;width:45px;height:22px;background:#4b4b4b;"></div>
<span class="t" style="left:-1.0px;top:116.5px;font-size:12px;line-height:14px;color:#d0d0d0;transform:scaleX(0.944);">iew</span>
<svg class="r" style="left:33.5px;top:121.5px;" width="5" height="5" viewBox="0 0 5 5"><path d="M0.3 0.3L4.7 4.7M4.7 0.3L0.3 4.7" stroke="#cfcfcf" stroke-width="1.5"/></svg>
<div class="r" style="left:47px;top:114px;width:113px;height:20px;background:#333;box-shadow:0 0 0 1px #1f1f1f;"></div>
<span class="t" style="left:53.0px;top:117.0px;font-size:11.5px;line-height:14px;color:#c8c8c8;transform:scaleX(0.972);">Animation Editor</span>
<svg class="r" style="left:147.5px;top:122.0px;" width="5" height="5" viewBox="0 0 5 5"><path d="M0.3 0.3L4.7 4.7M4.7 0.3L0.3 4.7" stroke="#cfcfcf" stroke-width="1.5"/></svg>
<div class="r" style="left:162px;top:114px;width:93px;height:20px;background:#333;box-shadow:0 0 0 1px #1f1f1f;"></div>
<span class="t" style="left:168.0px;top:117.0px;font-size:11.5px;line-height:14px;color:#c8c8c8;transform:scaleX(0.914);">Render View</span>
<svg class="r" style="left:242.5px;top:122.0px;" width="5" height="5" viewBox="0 0 5 5"><path d="M0.3 0.3L4.7 4.7M4.7 0.3L0.3 4.7" stroke="#cfcfcf" stroke-width="1.5"/></svg>
<div class="r" style="left:257px;top:114px;width:108px;height:20px;background:#333;box-shadow:0 0 0 1px #1f1f1f;"></div>
<span class="t" style="left:263.0px;top:117.0px;font-size:11.5px;line-height:14px;color:#c8c8c8;transform:scaleX(0.935);">Composite View</span>
<svg class="r" style="left:353.5px;top:122.0px;" width="5" height="5" viewBox="0 0 5 5"><path d="M0.3 0.3L4.7 4.7M4.7 0.3L0.3 4.7" stroke="#cfcfcf" stroke-width="1.5"/></svg>
<div class="r" style="left:367px;top:114px;width:104px;height:20px;background:#333;box-shadow:0 0 0 1px #1f1f1f;"></div>
<span class="t" style="left:374.0px;top:117.0px;font-size:11.5px;line-height:14px;color:#c8c8c8;transform:scaleX(0.903);">Motion FX View</span>
<svg class="r" style="left:459.5px;top:122.0px;" width="5" height="5" viewBox="0 0 5 5"><path d="M0.3 0.3L4.7 4.7M4.7 0.3L0.3 4.7" stroke="#cfcfcf" stroke-width="1.5"/></svg>
<div class="r" style="left:473px;top:114px;width:138px;height:20px;background:#333;box-shadow:0 0 0 1px #1f1f1f;"></div>
<span class="t" style="left:480.0px;top:117.0px;font-size:11.5px;line-height:14px;color:#c8c8c8;transform:scaleX(0.934);">Geometry Spreadsheet</span>
<svg class="r" style="left:599.5px;top:122.0px;" width="5" height="5" viewBox="0 0 5 5"><path d="M0.3 0.3L4.7 4.7M4.7 0.3L0.3 4.7" stroke="#cfcfcf" stroke-width="1.5"/></svg>
<span class="t" style="left:622.0px;top:113.5px;font-size:17px;line-height:20px;color:#e6e6e6;font-weight:bold;">+</span>
<div class="r" style="left:1172px;top:120px;width:12px;height:9px;background:#e2e2e2;"></div>
<svg class="r" style="left:1193px;top:121px;" width="9" height="6" viewBox="0 0 9 6"><path d="M0.5 0.5H8.5L4.5 5.5Z" fill="#e0e0e0"/></svg>
<div class="r" style="left:0px;top:135px;width:1207px;height:35px;background:#3a3a3a;"></div>
<div class="r" style="left:0px;top:147px;width:3px;height:13px;background:#4c4c4c;border-radius:0 3px 3px 0;"></div>
<div class="r" style="left:14px;top:140px;width:1045px;height:25px;background:#2f2f2f;box-shadow:inset 0 0 0 1px #161616;border-radius:1px;"></div>
<div class="r" style="left:1040px;top:141px;width:18px;height:23px;background:#3a3a3a;"></div>
<svg class="r" style="left:21px;top:143px;" width="17" height="18" viewBox="0 0 17 18"><path d="M1 7H16V17H1Z" fill="#9a9a9a"/><path d="M1 7H16V9.5H1Z" fill="#6c6c6c"/><path d="M1 3L15 0.5L15.6 3.6L1.6 6.2Z" fill="#cfcfcf"/><path d="M4 2.4L5.6 5.4M8 1.7L9.6 4.7M12 1L13.6 4" stroke="#4a4a4a" stroke-width="1.4"/><path d="M3 11H9M3 14H12" stroke="#c8c8c8" stroke-width="1.3"/></svg>
<span class="t" style="left:45.0px;top:144.5px;font-size:13px;line-height:16px;color:#dcdcdc;transform:scaleX(0.980);">obj</span>
<svg class="r" style="left:64px;top:141px;" width="9" height="23" viewBox="0 0 9 23"><path d="M1 0L7 11.5L1 23" stroke="#1a1a1a" stroke-width="1.2" fill="none"/></svg>
<svg class="r" style="left:78px;top:143px;" width="20" height="18" viewBox="0 0 20 18"><path d="M2 2H8V14H2Z" fill="#3d78d8"/><ellipse cx="5" cy="2.5" rx="3" ry="1.3" fill="#7fb0f0"/><circle cx="14.5" cy="10" r="5" fill="#e0302a"/><path d="M9 4L15 17H3Z" fill="#f2d02a"/><path d="M9 4L11 17H3Z" fill="#fff08a"/></svg>
<span class="t" style="left:102.0px;top:144.5px;font-size:13px;line-height:16px;color:#dcdcdc;transform:scaleX(0.954);">cup</span>
<svg class="r" style="left:1045px;top:149px;" width="9" height="7" viewBox="0 0 9 7"><path d="M0.5 0.5H8.5L4.5 6Z" fill="#8a8a8a"/></svg>
<svg class="r" style="left:1071px;top:145px;" width="18" height="15" viewBox="0 0 18 15"><path d="M0 7.5H6" stroke="#ddd" stroke-width="1.4"/><path d="M5 4L8 7.5L5 11Z M8 4.5H13V10.5H8Z" fill="#e4e4e4"/><path d="M14 2V13" stroke="#e4e4e4" stroke-width="2"/><path d="M3 4V11" stroke="#ddd" stroke-width="1"/></svg>
<svg class="r" style="left:1095px;top:143px;" width="19" height="19" viewBox="0 0 19 19"><circle cx="9.5" cy="9.5" r="8.3" fill="none" stroke="#4a72c8" stroke-width="1.5"/><circle cx="9.5" cy="9.5" r="5.2" fill="none" stroke="#4a72c8" stroke-width="1.4"/><circle cx="9.5" cy="9.5" r="2.6" fill="#3f63b4"/></svg>
<svg class="r" style="left:1133px;top:144px;" width="22" height="20" viewBox="0 0 22 20"><path d="M1 4L9 1L16 4V13L9 16L1 13Z" fill="#aab6ba"/><path d="M1 4L9 7L16 4L9 1Z" fill="#e4eaec"/><path d="M9 7V16L1 13V4Z" fill="#8a989d"/><path d="M14 15H21L17.5 19Z" fill="#8f8f8f"/></svg>
<svg class="r" style="left:1158px;top:143px;" width="24" height="22" viewBox="0 0 24 22"><path d="M2 1H8V8L5 12L9 17H1L4 12L2 8Z" fill="none" stroke="#8a8a8a" stroke-width="1.2"/><circle cx="14" cy="11" r="6" fill="#3f7fd8"/><circle cx="12.5" cy="9" r="2.2" fill="#9cc4f4"/><path d="M16 17H23L19.5 21Z" fill="#8f8f8f"/></svg>
<div class="r" style="left:1185px;top:145px;width:16px;height:16px;background:#e6e6e6;"></div>
<svg class="r" style="left:1196px;top:161px;" width="8" height="5" viewBox="0 0 8 5"><path d="M0 0H8L4 5Z" fill="#8f8f8f"/></svg>
<div class="r" style="left:0px;top:170px;width:1207px;height:2px;background:#1c1c1c;"></div>
<div class="r" style="left:0px;top:172px;width:1207px;height:33px;background:#303030;"></div>
<div class="r" style="left:0px;top:205px;width:1207px;height:1.5px;background:#1c1c1c;"></div>
<div class="r" style="left:267px;top:176px;width:22px;height:26px;background:#5d7da6;box-shadow:inset 0 0 0 1px #7e9cc4;"></div>
<div class="r" style="left:355px;top:176px;width:22px;height:26px;background:#5d7da6;box-shadow:inset 0 0 0 1px #7e9cc4;"></div>
<div class="r" style="left:291px;top:176px;width:1px;height:26px;background:#484848;"></div>
<div class="r" style="left:348px;top:176px;width:1px;height:26px;background:#484848;"></div>
<div class="r" style="left:462px;top:176px;width:1px;height:26px;background:#484848;"></div>
<div class="r" style="left:602px;top:176px;width:1px;height:26px;background:#484848;"></div>
<svg class="r" style="left:217px;top:179px;" width="19" height="19" viewBox="0 0 19 19"><path d="M6 5L13 3L17 7V14L10 16L5 12Z" fill="#8f8f8f"/><path d="M6 5L10 8V16L5 12Z" fill="#6e6e6e"/><circle cx="4" cy="4" r="2.2" fill="#ffe15a"/><circle cx="3" cy="10" r="2.2" fill="#ffe15a"/><circle cx="8" cy="16" r="2.4" fill="#ffe15a"/><circle cx="10" cy="9" r="1.8" fill="#ffe15a"/></svg>
<svg class="r" style="left:244px;top:179px;" width="18" height="19" viewBox="0 0 18 19"><path d="M1 4L10 1L17 4V14L9 18L1 15Z" fill="#b9b9b9"/><path d="M1 4L9 7L17 4L10 1Z" fill="#dedede"/><path d="M9 7V18L1 15V4Z" fill="#f0f0e8"/><path d="M7 6.5L9 7V18L7 17.3Z" fill="#f2c21c"/></svg>
<svg class="r" style="left:269px;top:178px;" width="18" height="22" viewBox="0 0 18 22"><path d="M9 1L16 8L9 15L2 8Z" fill="#8e8e86" /><path d="M9 11L14 16L9 21L4 16Z" fill="#f6d23c"/></svg>
<svg class="r" style="left:297px;top:181px;" width="10" height="10" viewBox="0 0 10 10"><circle cx="5" cy="5" r="3.6" fill="#d9a8e0" stroke="#a050b0" stroke-width="1.6"/></svg>
<svg class="r" style="left:321px;top:179px;" width="19" height="19" viewBox="0 0 19 19"><circle cx="9.5" cy="9.5" r="7.6" fill="none" stroke="#e6e6e6" stroke-width="1.7"/><circle cx="2" cy="9.5" r="2.3" fill="#f2c21c"/><circle cx="9.5" cy="1.8" r="1.2" fill="#fff"/><circle cx="17" cy="9.5" r="1.2" fill="#fff"/><circle cx="9.5" cy="17.2" r="1.2" fill="#fff"/></svg>
<svg class="r" style="left:358px;top:180px;" width="17" height="17" viewBox="0 0 17 17"><rect x="1" y="1" width="15" height="15" fill="#f2f2dc" stroke="#222" stroke-width="1.2" stroke-dasharray="2 1.2"/></svg>
<svg class="r" style="left:383px;top:180px;" width="19" height="18" viewBox="0 0 19 18"><ellipse cx="11" cy="6.5" rx="7" ry="4.4" transform="rotate(-18 11 6.5)" fill="none" stroke="#bdbdbd" stroke-width="1.8"/><path d="M5 9C2 11 3 15 6 16" stroke="#bdbdbd" stroke-width="1.6" fill="none"/></svg>
<svg class="r" style="left:409px;top:179px;" width="19" height="20" viewBox="0 0 19 20"><path d="M2 7C4 2 9 1 12 3L9 8L4 11Z" fill="#f2eecc"/><path d="M11 4L16 12L17 19L14 18L12 12L8 8Z" fill="#b9b9b9"/><path d="M13 9L15 17" stroke="#555" stroke-width="1"/></svg>
<svg class="r" style="left:439px;top:180px;" width="13" height="18" viewBox="0 0 13 18"><path d="M1 1L11 16" stroke="#c8c8c8" stroke-width="1.8"/><path d="M1 1L5 7" stroke="#d42a2a" stroke-width="2"/></svg>
<svg class="r" style="left:471px;top:179px;" width="18" height="20" viewBox="0 0 18 20"><path d="M1 6C4 2 10 2 13 6C10 10 4 10 1 6Z" fill="#e4e4e4"/><circle cx="7" cy="6" r="2.6" fill="#222"/><path d="M9 7L16 14L12.5 14.2L14.5 18.5L12.7 19.2L10.8 15L9 17.5Z" fill="#f2f2f2" stroke="#333" stroke-width=".5"/></svg>
<svg class="r" style="left:498px;top:179px;" width="18" height="19" viewBox="0 0 18 19"><rect x="3" y="5" width="13" height="13" fill="none" stroke="#d83a3a" stroke-width="1.4" stroke-dasharray="2 1"/><path d="M9.5 5L15 11L9.5 17L4 11Z" fill="#f6d23c"/><path d="M1 2L6 1L7 5L3 6Z" fill="#e8a0a0"/></svg>
<svg class="r" style="left:522px;top:179px;" width="20" height="20" viewBox="0 0 20 20"><circle cx="10" cy="10" r="8.6" fill="none" stroke="#9a8f7a" stroke-width="1.6"/><path d="M10 3L17 10L10 17L3 10Z" fill="#f6d23c"/><path d="M6.5 6.5L13.5 13.5M13.5 6.5L6.5 13.5" stroke="#c8a420" stroke-width=".9"/></svg>
<svg class="r" style="left:549px;top:179px;" width="17" height="20" viewBox="0 0 17 20"><path d="M5 1V11M0 6H10M1.5 2.5L8.5 9.5M8.5 2.5L1.5 9.5" stroke="#f2f2f2" stroke-width="1.5"/><path d="M8 7L15.5 14L12 14.3L14 18.6L12.2 19.3L10.3 15L8 17.5Z" fill="#f2f2f2" stroke="#333" stroke-width=".5"/></svg>
<svg class="r" style="left:575px;top:178px;" width="19" height="21" viewBox="0 0 19 21"><path d="M1 10L4 1L7 9L9.5 0L12 9L15 1L18 10V16H1Z" fill="#e8d230"/><path d="M1 12H18V17H1Z" fill="#b0a838"/><path d="M12 16H19L15.5 20.5Z" fill="#8fa0b0" transform="rotate(-90 15.5 18)"/></svg>
<div class="r" style="left:609px;top:177px;width:106px;height:22px;background:#454545;box-shadow:inset 0 1px 0 #585858, 0 0 0 1px #1f1f1f;border-radius:1px;"></div>
<div class="r" style="left:692px;top:178px;width:22px;height:20px;background:#3c3c3c;"></div>
<span class="t" style="left:624.0px;top:180.5px;font-size:11.5px;line-height:14px;color:#cfcfcf;">Select</span>
<svg class="r" style="left:700px;top:184px;" width="8" height="6" viewBox="0 0 8 6"><path d="M0.3 0.3H7.7L4 5.7Z" fill="#9a9a9a"/></svg>
<div class="r" style="left:729px;top:177px;width:106px;height:22px;background:#454545;box-shadow:inset 0 1px 0 #585858, 0 0 0 1px #1f1f1f;border-radius:1px;"></div>
<div class="r" style="left:811px;top:178px;width:23px;height:20px;background:#3c3c3c;"></div>
<span class="t" style="left:744.0px;top:180.5px;font-size:11.5px;line-height:14px;color:#cfcfcf;transform:scaleX(1.065);">Visibility</span>
<svg class="r" style="left:820px;top:184px;" width="8" height="6" viewBox="0 0 8 6"><path d="M0.3 0.3H7.7L4 5.7Z" fill="#9a9a9a"/></svg>
<svg class="r" style="left:1159px;top:180px;" width="20" height="19" viewBox="0 0 20 19"><circle cx="4" cy="2.5" r="1.8" fill="#e4e4e4"/><path d="M1 8A3 3 0 0 1 7 8Z" fill="#5fa0ec"/><circle cx="12" cy="6" r="1.6" fill="#e4e4e4"/><path d="M9 11A3 3 0 0 1 15 11Z" fill="#5fa0ec"/><circle cx="4" cy="11.5" r="1.8" fill="#e4e4e4"/><path d="M1 17A3 3 0 0 1 7 17Z" fill="#5fa0ec"/><path d="M12 14H20L16 18.5Z" fill="#8f8f8f"/></svg>
<svg class="r" style="left:1184px;top:179px;" width="18" height="18" viewBox="0 0 18 18"><circle cx="9" cy="9" r="7.6" fill="none" stroke="#e8e8e8" stroke-width="1.7"/></svg>
<span class="t" style="left:1189.0px;top:180.5px;font-size:13px;line-height:16px;color:#f0f0f0;font-weight:bold;">?</span>
<!-- viewport -->
<div class="r" style="left:0px;top:206px;width:1179px;height:804px;background:linear-gradient(180deg,#67838f 0%,#7d949e 30%,#98a9ae 60%,#b6c1c2 85%,#c6cecd 100%);"></div>
<svg class="r" style="left:0px;top:207px;" width="1179" height="803" viewBox="0 207 1179 803"><defs>
<linearGradient id="cin" gradientUnits="userSpaceOnUse" x1="407" y1="0" x2="762" y2="0">
<stop offset="0" stop-color="#7a4e04"/><stop offset=".08" stop-color="#714702"/><stop offset=".18" stop-color="#623d00"/><stop offset=".3" stop-color="#553400"/><stop offset=".44" stop-color="#462a00"/><stop offset=".57" stop-color="#3a2200"/><stop offset=".66" stop-color="#311b00"/><stop offset=".735" stop-color="#291500"/><stop offset=".8" stop-color="#1c0d00"/><stop offset="1" stop-color="#120600"/></linearGradient>
<linearGradient id="cout" gradientUnits="userSpaceOnUse" x1="407" y1="0" x2="762" y2="0">
<stop offset="0" stop-color="#3a1800"/><stop offset=".24" stop-color="#2c1000"/><stop offset=".27" stop-color="#371700"/><stop offset=".335" stop-color="#5a3500"/><stop offset=".47" stop-color="#7c4c00"/><stop offset=".63" stop-color="#9a6200"/><stop offset=".83" stop-color="#a76b00"/><stop offset=".93" stop-color="#ae7100"/><stop offset="1" stop-color="#b47600"/></linearGradient>
<linearGradient id="cdk" gradientUnits="userSpaceOnUse" x1="650" y1="0" x2="700" y2="0"><stop offset="0" stop-color="#1d0d00"/><stop offset=".5" stop-color="#140700"/><stop offset="1" stop-color="#110500"/></linearGradient><linearGradient id="cfl" gradientUnits="userSpaceOnUse" x1="488" y1="0" x2="690" y2="0"><stop offset="0" stop-color="#805200"/><stop offset=".5" stop-color="#7b4e00"/><stop offset="1" stop-color="#845400"/></linearGradient>
<linearGradient id="cinv" gradientUnits="userSpaceOnUse" x1="0" y1="341" x2="0" y2="650"><stop offset="0" stop-color="#000" stop-opacity=".12"/><stop offset=".5" stop-color="#000" stop-opacity="0"/><stop offset="1" stop-color="#a06000" stop-opacity=".12"/></linearGradient>
</defs><clipPath id="cpo"><polygon points="408,518 437,585 492,629 574.5,650 658,640 725,596.5 762,534 754.5,560 742,620 728,695 711,740 690,780.6 641,813.8 577.5,827.3 517,808.5 473,771 452.8,719.5 441.7,667 430.5,617 420.8,575"/></clipPath><clipPath id="cpf"><polygon points="488,617.5 539,588.3 593,579.6 646,593.5 685,620 658,640 574.5,650 492,629"/></clipPath><clipPath id="cpi"><polygon points="595,341 669,359 727.5,401 761,459 762,534 725,596.5 658,640 574.5,650 492,629 437,585 408,518 415,445 456,389 519,352"/></clipPath><polygon points="408,518 437,585 492,629 574.5,650 658,640 725,596.5 762,534 754.5,560 742,620 728,695 711,740 690,780.6 641,813.8 577.5,827.3 517,808.5 473,771 452.8,719.5 441.7,667 430.5,617 420.8,575" fill="url(#cout)"/><defs><linearGradient id="g0" gradientUnits="userSpaceOnUse" x1="436.8" y1="647.2" x2="490.3" y2="637.8"><stop offset="0" stop-color="#452200"/><stop offset="0.08" stop-color="#341600"/><stop offset="0.2" stop-color="#2e1200"/><stop offset="1" stop-color="#2b1000"/></linearGradient><linearGradient id="g2" gradientUnits="userSpaceOnUse" x1="504.5" y1="718.8" x2="574.0" y2="713.3"><stop offset="0" stop-color="#3e1f00"/><stop offset="0.12" stop-color="#4a2900"/><stop offset="0.5" stop-color="#663d00"/><stop offset="1" stop-color="#7f4f00"/></linearGradient><linearGradient id="g3" gradientUnits="userSpaceOnUse" x1="576.0" y1="738.6" x2="648.9" y2="741.6"><stop offset="0" stop-color="#855300"/><stop offset="1" stop-color="#9a6200"/></linearGradient><linearGradient id="g4" gradientUnits="userSpaceOnUse" x1="649.5" y1="726.9" x2="700.8" y2="734.4"><stop offset="0" stop-color="#9e6500"/><stop offset="1" stop-color="#a76b00"/></linearGradient><linearGradient id="g5" gradientUnits="userSpaceOnUse" x1="707.5" y1="688.5" x2="723.7" y2="692.0"><stop offset="0" stop-color="#a96d00"/><stop offset="1" stop-color="#b27400"/></linearGradient></defs><polygon points="400,505 437,585 492,629 517,808.5 473,780 440,780" fill="url(#g0)" clip-path="url(#cpo)"/><polygon points="492,629 574.5,650 577.5,830 517,808.5" fill="url(#g2)" clip-path="url(#cpo)"/><polygon points="574.5,650 658,640 641,816 577.5,830" fill="url(#g3)" clip-path="url(#cpo)"/><polygon points="658,640 725,596.5 690,783 641,816" fill="url(#g4)" clip-path="url(#cpo)"/><polygon points="725,596.5 770,525 770,700 690,783" fill="url(#g5)" clip-path="url(#cpo)"/><polygon points="595,341 669,359 727.5,401 761,459 762,534 725,596.5 658,640 574.5,650 492,629 437,585 408,518 415,445 456,389 519,352" fill="url(#cin)"/><polygon points="595,341 669,359 727.5,401 761,459 762,534 725,596.5 658,640 574.5,650 492,629 437,585 408,518 415,445 456,389 519,352" fill="url(#cinv)"/><polygon points="669,359 727.5,401 761,459 762,534 725,596.5 685,620 646,593.5" fill="url(#cdk)"/><polygon points="488,617.5 539,588.3 593,579.6 646,593.5 685,620 658,640 574.5,650 492,629" fill="url(#cfl)"/><path d="M492 629L517 808.5" stroke="#553000" stroke-opacity=".42" stroke-width="1" fill="none" clip-path="url(#cpo)"/><path d="M574.5 650L577.5 827.3" stroke="#553000" stroke-opacity=".42" stroke-width="1" fill="none" clip-path="url(#cpo)"/><path d="M658 640L641 813.8" stroke="#553000" stroke-opacity=".42" stroke-width="1" fill="none" clip-path="url(#cpo)"/><path d="M725 596.5L691 780.4" stroke="#553000" stroke-opacity=".42" stroke-width="1" fill="none" clip-path="url(#cpo)"/><path d="M437 585L473 771" stroke="#553000" stroke-opacity=".42" stroke-width="1" fill="none" clip-path="url(#cpo)"/><path d="M748 570L722 690" stroke="#553000" stroke-opacity=".42" stroke-width="1" fill="none" clip-path="url(#cpo)"/><path d="M445.9 630.9L498.2 673.3L575.2 693.8L653.8 682.9L716.6 641.9L744.6 600.8" stroke="#553000" stroke-opacity=".42" stroke-width="1" fill="none" clip-path="url(#cpo)"/><path d="M454.1 673.4L503.9 714.3L575.9 734.2L649.9 722.6L708.9 683.9L736.0 638.4" stroke="#553000" stroke-opacity=".42" stroke-width="1" fill="none" clip-path="url(#cpo)"/><path d="M461.3 710.5L508.9 750.2L576.5 769.7L646.5 757.3L702.0 720.6L728.4 671.4" stroke="#553000" stroke-opacity=".42" stroke-width="1" fill="none" clip-path="url(#cpo)"/><path d="M467.4 742.2L513.1 780.7L577.0 799.8L643.6 786.9L696.3 751.9L721.9 699.4" stroke="#553000" stroke-opacity=".42" stroke-width="1" fill="none" clip-path="url(#cpo)"/><path d="M539 588.3L627 650M646 593.5L573 650" stroke="#5c3900" stroke-opacity=".55" stroke-width="1" fill="none" clip-path="url(#cpf)"/><path d="M669 359L646 593.5" stroke="#8a6a30" stroke-opacity=".09" stroke-width="1" fill="none"/><path d="M727.5 401L685 620" stroke="#8a6a30" stroke-opacity=".09" stroke-width="1" fill="none"/><path d="M761 459L725 596.5" stroke="#8a6a30" stroke-opacity=".09" stroke-width="1" fill="none"/><path d="M519 352L539 588.3" stroke="#8a6a30" stroke-opacity=".09" stroke-width="1" fill="none"/><path d="M456 389L488 617.5" stroke="#8a6a30" stroke-opacity=".09" stroke-width="1" fill="none"/><path d="M415 445L437 585" stroke="#8a6a30" stroke-opacity=".09" stroke-width="1" fill="none"/><path d="M419.8 475.8L463.0 439.3L523.4 404.0L594.6 393.5L663.9 410.6L718.1 449.2L753.1 489.2" stroke="#8a6a30" stroke-opacity=".09" stroke-width="1" fill="none"/><path d="M424.2 503.8L469.4 485.0L527.4 451.2L594.2 441.2L659.3 457.5L709.6 493.0L745.9 516.8" stroke="#8a6a30" stroke-opacity=".09" stroke-width="1" fill="none"/><path d="M428.2 529.0L475.2 526.1L531.0 493.8L593.8 484.2L655.2 499.7L702.0 532.4L739.4 541.5" stroke="#8a6a30" stroke-opacity=".09" stroke-width="1" fill="none"/><path d="M431.7 551.4L480.3 562.7L534.2 531.6L593.5 522.3L651.5 537.2L695.2 567.4L733.6 563.5" stroke="#8a6a30" stroke-opacity=".09" stroke-width="1" fill="none"/><path d="M434.8 571.0L484.8 594.6L537.0 564.7L593.2 555.7L648.3 570.0L689.2 598.1L728.6 582.8" stroke="#8a6a30" stroke-opacity=".09" stroke-width="1" fill="none"/></svg>
<svg class="r" style="left:13px;top:221px;" width="24" height="32" viewBox="0 0 24 32"><path d="M3 2.5V24L8.5 19L12.5 28.5L16 27L12 17.8L19.5 17.5Z" fill="#111" stroke="#e8eef0" stroke-opacity=".55" stroke-width="1"/></svg>
<span class="t" style="left:47.0px;top:225.5px;font-size:14.5px;line-height:17px;color:#fff;font-weight:bold;transform:scaleX(1.030);text-shadow:1px 1px 1px #1a2a30;">Select</span>
<div class="r" style="left:1044px;top:211px;width:55px;height:22px;background:rgba(255,255,255,.10);border-radius:11px;box-shadow:inset 0 0 0 1.3px rgba(205,220,228,.75);"></div>
<span class="t" style="left:1052.0px;top:214.0px;font-size:11.5px;line-height:14px;color:#dfe6e9;transform:scaleX(0.965);">Persp</span>
<svg class="r" style="left:1084.5px;top:220px;" width="7" height="4" viewBox="0 0 7 4"><path d="M0 0H7L3.5 4Z" fill="#f0f4f5"/></svg>
<div class="r" style="left:1108px;top:211px;width:65px;height:22px;background:rgba(255,255,255,.10);border-radius:11px;box-shadow:inset 0 0 0 1.3px rgba(205,220,228,.75);"></div>
<span class="t" style="left:1115.0px;top:214.0px;font-size:11.5px;line-height:14px;color:#dfe6e9;transform:scaleX(1.035);">No cam</span>
<svg class="r" style="left:1158.5px;top:220px;" width="7" height="4" viewBox="0 0 7 4"><path d="M0 0H7L3.5 4Z" fill="#f0f4f5"/></svg>
<span class="t" style="left:421.0px;top:945.5px;font-size:12.5px;line-height:15px;color:#3b3bdc;font-weight:bold;transform:scaleX(0.956);">Select the geometry, then choose an operation to perform.</span>
<span class="t" style="left:457.0px;top:970.5px;font-size:12.5px;line-height:15px;color:#2e3436;transform:scaleX(0.949);">Hold A to select full (MMB) or partial (LMB) loops.</span>
<span class="t" style="left:457.0px;top:986.5px;font-size:12.5px;line-height:15px;color:#2e3436;transform:scaleX(0.966);">Hold H to select by flood fill.</span>
<span class="t" style="left:1034.0px;top:985.5px;font-size:12.5px;line-height:15px;color:#ece81a;transform:scaleX(0.974);">Non-Commercial Edition</span>
<svg class="r" style="left:0px;top:980px;" width="30" height="26" viewBox="0 0 30 26"><path d="M8.7 14.2L18 21.8" stroke="#e03030" stroke-width="1.3"/><path d="M8.7 14.2L10.2 8.4" stroke="#3fd23f" stroke-width="1.6"/><path d="M8.7 14.2L2.5 20.5" stroke="#2a2ae0" stroke-width="1.6"/></svg>
<span class="t" style="left:9.4px;top:977.0px;font-size:11px;line-height:13px;color:#46d246;font-weight:bold;">y</span>
<span class="t" style="left:19.8px;top:991.3px;font-size:10.5px;line-height:13px;color:#e03030;">x</span>
<span class="t" style="left:0.2px;top:993.0px;font-size:11px;line-height:13px;color:#2a2ae0;font-weight:bold;font-style:italic;">z</span>
<!-- strip -->
<div class="r" style="left:1179px;top:207px;width:28px;height:803px;background:#3a3a3a;"></div>
<div class="r" style="left:1207px;top:113px;width:2px;height:897px;background:#1e1e1e;"></div>
<div class="r" style="left:1209px;top:113px;width:5.5px;height:897px;background:#474747;"></div>
<div class="r" style="left:1214.5px;top:113px;width:1.5px;height:897px;background:#262626;"></div>
<div class="r" style="left:1179px;top:207px;width:28px;height:9px;background:#4a4a4a;box-shadow:inset 0 -1px 0 #2a2a2a;"></div>
<svg class="r" style="left:1199px;top:208px;" width="7" height="8" viewBox="0 0 7 8"><path d="M0 0L7 4L0 8Z" fill="#0c0c0c"/></svg>
<svg class="r" style="left:1209px;top:524px;" width="5" height="8" viewBox="0 0 5 8"><path d="M4.5 0.5L0.5 4L4.5 7.5Z" fill="#7a7a7a"/></svg>
<svg class="r" style="left:1209px;top:591px;" width="5" height="8" viewBox="0 0 5 8"><path d="M0.5 0.5L4.5 4L0.5 7.5Z" fill="#7a7a7a"/></svg>
<svg class="r" style="left:1209px;top:550px;" width="6" height="22" viewBox="0 0 6 22"><rect x="0.5" y="0" width="1.4" height="1.2" fill="#7e7e7e"/><rect x="0.5" y="3" width="1.4" height="1.2" fill="#7e7e7e"/><rect x="0.5" y="6" width="1.4" height="1.2" fill="#7e7e7e"/><rect x="0.5" y="9" width="1.4" height="1.2" fill="#7e7e7e"/><rect x="0.5" y="12" width="1.4" height="1.2" fill="#7e7e7e"/><rect x="0.5" y="15" width="1.4" height="1.2" fill="#7e7e7e"/><rect x="0.5" y="18" width="1.4" height="1.2" fill="#7e7e7e"/><rect x="0.5" y="21" width="1.4" height="1.2" fill="#7e7e7e"/><rect x="3" y="0" width="1.4" height="1.2" fill="#7e7e7e"/><rect x="3" y="3" width="1.4" height="1.2" fill="#7e7e7e"/><rect x="3" y="6" width="1.4" height="1.2" fill="#7e7e7e"/><rect x="3" y="9" width="1.4" height="1.2" fill="#7e7e7e"/><rect x="3" y="12" width="1.4" height="1.2" fill="#7e7e7e"/><rect x="3" y="15" width="1.4" height="1.2" fill="#7e7e7e"/><rect x="3" y="18" width="1.4" height="1.2" fill="#7e7e7e"/><rect x="3" y="21" width="1.4" height="1.2" fill="#7e7e7e"/></svg>
<svg class="r" style="left:1183.0px;top:223.0px;" width="20" height="20" viewBox="0 0 20 20"><path d="M10 4L19 9L10 14L1 9Z" fill="none" stroke="#e2e2e2" stroke-width="1.4"/><path d="M5.5 6.5L14.5 11.5M14.5 6.5L5.5 11.5" stroke="#e2e2e2" stroke-width="1"/></svg>
<svg class="r" style="left:1201px;top:236px;" width="5" height="7" viewBox="0 0 5 7"><path d="M0 0L5 3.5L0 7Z" fill="#9a9a9a"/></svg>
<svg class="r" style="left:1183.0px;top:247.0px;" width="20" height="20" viewBox="0 0 20 20"><path d="M2 3L15 2L18 15L5 17Z" fill="none" stroke="#9ac43a" stroke-width="1.4"/><path d="M7 13A4 4 0 1 1 12 11A2 2 0 1 1 10 8" stroke="#cfe0b0" stroke-width="1.4" fill="none"/></svg>
<svg class="r" style="left:1201px;top:260px;" width="5" height="7" viewBox="0 0 5 7"><path d="M0 0L5 3.5L0 7Z" fill="#9a9a9a"/></svg>
<svg class="r" style="left:1183.0px;top:275.0px;" width="20" height="20" viewBox="0 0 20 20"><path d="M6 9V6A4 4 0 0 1 14 6V9" fill="none" stroke="#e2e2e2" stroke-width="2"/><rect x="3.5" y="9" width="13" height="9.5" fill="#e2e2e2"/><path d="M3.5 12H16.5M3.5 15H16.5" stroke="#9a9a9a" stroke-width=".8"/></svg>
<svg class="r" style="left:1183.0px;top:302.0px;" width="20" height="20" viewBox="0 0 20 20"><circle cx="10" cy="8" r="6" fill="none" stroke="#e2e2e2" stroke-width="1.4"/><path d="M6.5 4.5L13.5 11.5M13.5 4.5L6.5 11.5" stroke="#e2e2e2" stroke-width="1.4"/><path d="M7.5 15H12.5V18H7.5Z" fill="#9a9a9a"/></svg>
<svg class="r" style="left:1183.0px;top:329.0px;" width="20" height="20" viewBox="0 0 20 20"><path d="M10 1L19 10L10 19L1 10Z" fill="#222" stroke="#e2e2e2" stroke-width="1.5"/><circle cx="10" cy="8.5" r="3.6" fill="#e2e2e2"/><path d="M8.5 12H11.5V15H8.5Z" fill="#e2e2e2"/></svg>
<svg class="r" style="left:1201px;top:343px;" width="5" height="7" viewBox="0 0 5 7"><path d="M0 0L5 3.5L0 7Z" fill="#9a9a9a"/></svg>
<div class="r" style="left:1183px;top:354px;width:21px;height:23px;background:#5d7da6;box-shadow:inset 0 0 0 1px #6f8fb8;"></div>
<svg class="r" style="left:1183.0px;top:355.0px;" width="20" height="20" viewBox="0 0 20 20"><circle cx="10" cy="7.5" r="6" fill="#eef0f0"/><path d="M7.5 13H12.5V17.5H7.5Z" fill="#8a9498"/></svg>
<svg class="r" style="left:1201px;top:371px;" width="5" height="7" viewBox="0 0 5 7"><path d="M0 0L5 3.5L0 7Z" fill="#9a9a9a"/></svg>
<div class="r" style="left:1183px;top:383px;width:21px;height:24px;background:#5d7da6;box-shadow:inset 0 0 0 1px #6f8fb8;"></div>
<svg class="r" style="left:1183.0px;top:385.0px;" width="20" height="20" viewBox="0 0 20 20"><path d="M2 5L10 2L18 5V15L10 19L2 15Z" fill="#e8e8e8"/><path d="M2 5L10 8V19L2 15Z" fill="#222"/><path d="M10 8L18 5V10L10 13Z" fill="#222"/><path d="M6 3.5L10 2L14 3.5L10 5Z" fill="#222"/><path d="M2 10L6 11.7V6.5L2 5Z" fill="#ddd"/><path d="M6 17V11.7L10 13.5V19Z" fill="#ddd"/></svg>
<svg class="r" style="left:1201px;top:400px;" width="5" height="7" viewBox="0 0 5 7"><path d="M0 0L5 3.5L0 7Z" fill="#9a9a9a"/></svg>
<svg class="r" style="left:1183.0px;top:411.0px;" width="20" height="20" viewBox="0 0 20 20"><path d="M2 6C6 3 11 5 14 9M3 9C7 7 11 9 13 12" stroke="#e2e2e2" stroke-width="1.5" fill="none"/><circle cx="7" cy="9.5" r="2.6" fill="none" stroke="#e2e2e2" stroke-width="1.3"/><circle cx="13" cy="12.5" r="2.6" fill="none" stroke="#e2e2e2" stroke-width="1.3"/><path d="M11 16H19L15 19.5Z" fill="#9a9a9a"/></svg>
<svg class="r" style="left:1183.0px;top:438.0px;" width="20" height="20" viewBox="0 0 20 20"><path d="M2 5C6 2 11 4 14 8" stroke="#e2e2e2" stroke-width="1.5" fill="none"/><circle cx="8" cy="7" r="2.4" fill="none" stroke="#e2e2e2" stroke-width="1.3"/><circle cx="13" cy="9" r="2.4" fill="none" stroke="#e2e2e2" stroke-width="1.3"/><path d="M3 10H13V18H3Z" fill="#d8d8d8"/><path d="M6 12L10 14L6 16Z" fill="#444"/></svg>
<svg class="r" style="left:1201px;top:453px;" width="5" height="7" viewBox="0 0 5 7"><path d="M0 0L5 3.5L0 7Z" fill="#9a9a9a"/></svg>
<div class="r" style="left:1181px;top:461px;width:24px;height:1px;background:#2a2a2a;"></div>
<svg class="r" style="left:1183.0px;top:469.0px;" width="20" height="20" viewBox="0 0 20 20"><circle cx="10" cy="10" r="2.4" fill="#e2e2e2"/></svg>
<svg class="r" style="left:1183.0px;top:498.0px;" width="20" height="20" viewBox="0 0 20 20"><path d="M14 4L8 12" stroke="#e2e2e2" stroke-width="1.6"/><path d="M8 12A3 3 0 0 1 4 15" stroke="#e2e2e2" stroke-width="2.6" fill="none"/></svg>
<svg class="r" style="left:1183.0px;top:524.0px;" width="20" height="20" viewBox="0 0 20 20"><path d="M15 4L8 13" stroke="#e2e2e2" stroke-width="2.6" stroke-linecap="round"/><path d="M8 13L4 17" stroke="#e2e2e2" stroke-width="1.3"/></svg>
<svg class="r" style="left:1183.0px;top:550.0px;" width="20" height="20" viewBox="0 0 20 20"><circle cx="4" cy="15" r="2.2" fill="#e2e2e2"/></svg>
<span class="t" style="left:1189.4px;top:552.0px;font-size:10px;line-height:12px;color:#e2e2e2;font-weight:bold;">12</span>
<svg class="r" style="left:1183.0px;top:578.0px;" width="20" height="20" viewBox="0 0 20 20"><path d="M3 13L11 10L16 15L6 18Z" fill="#e2e2e2"/><path d="M10 11L15 3" stroke="#e2e2e2" stroke-width="1.6"/></svg>
<svg class="r" style="left:1201px;top:591px;" width="5" height="7" viewBox="0 0 5 7"><path d="M0 0L5 3.5L0 7Z" fill="#9a9a9a"/></svg>
<svg class="r" style="left:1183.0px;top:605.0px;" width="20" height="20" viewBox="0 0 20 20"><path d="M2 12L10 9L14 13L5 17Z" fill="#e2e2e2"/></svg>
<span class="t" style="left:1191.4px;top:605.0px;font-size:10px;line-height:12px;color:#e2e2e2;font-weight:bold;">12</span>
<svg class="r" style="left:1183.0px;top:633.0px;" width="20" height="20" viewBox="0 0 20 20"><path d="M4 18V4H18" fill="none" stroke="#e2e2e2" stroke-width="1.5"/><path d="M4 18C6 10 10 6 18 4" stroke="#9a9a9a" stroke-width="1" fill="none"/><circle cx="18" cy="4" r="1.6" fill="#e2e2e2"/><circle cx="4" cy="18" r="1.6" fill="#e2e2e2"/></svg>
<div class="r" style="left:1183px;top:658px;width:21px;height:25px;background:#5d7da6;box-shadow:inset 0 0 0 1px #6f8fb8;"></div>
<svg class="r" style="left:1183.0px;top:661.0px;" width="20" height="20" viewBox="0 0 20 20"><path d="M2 15L13 3L18 12Z" fill="#e6ecf2"/><path d="M2 15L18 12L12 17Z" fill="#3f6fc0"/></svg>
<div class="r" style="left:1183px;top:686px;width:21px;height:24px;background:#5d7da6;box-shadow:inset 0 0 0 1px #6f8fb8;"></div>
<svg class="r" style="left:1183.0px;top:688.0px;" width="20" height="20" viewBox="0 0 20 20"><rect x="3" y="3" width="14" height="14" fill="#f0f0f0"/><path d="M3 3H7.7V7.7H3ZM12.3 3H17V7.7H12.3ZM7.7 7.7H12.3V12.3H7.7ZM3 12.3H7.7V17H3ZM12.3 12.3H17V17H12.3Z" fill="#e06a6a"/><path d="M3 10L17 3V10L10 17H3Z" fill="#7fa8e0" opacity=".55"/></svg>
<svg class="r" style="left:1201px;top:703px;" width="5" height="7" viewBox="0 0 5 7"><path d="M0 0L5 3.5L0 7Z" fill="#9a9a9a"/></svg>
<svg class="r" style="left:1183.0px;top:714.0px;" width="20" height="20" viewBox="0 0 20 20"><path d="M10 3L18 10L10 17L2 10Z" fill="#9fb8d8"/><path d="M10 6L14 10L10 14L6 10Z" fill="#f4f4f4"/></svg>
<svg class="r" style="left:1183.0px;top:740.0px;" width="20" height="20" viewBox="0 0 20 20"><path d="M3 4C6 6 14 6 17 4C15 8 15 12 17 16C14 14 6 14 3 16C5 12 5 8 3 4Z" fill="#9fd07a" stroke="#4f8a3a" stroke-width="1.2"/></svg>
<svg class="r" style="left:1183.0px;top:769.0px;" width="20" height="20" viewBox="0 0 20 20"><circle cx="11" cy="10" r="2.2" fill="#e2e2e2"/><path d="M11 10L16 3M11 10L16 17M11 10H2" stroke="#e2e2e2" stroke-width="1.8"/></svg>
<svg class="r" style="left:1183.0px;top:795.0px;" width="20" height="20" viewBox="0 0 20 20"><circle cx="10" cy="10" r="8" fill="none" stroke="#e2e2e2" stroke-width="1.4"/><rect x="5.5" y="6" width="9" height="8" fill="#e2e2e2"/></svg>
<div class="r" style="left:1183px;top:821px;width:21px;height:25px;background:#5d7da6;box-shadow:inset 0 0 0 1px #6f8fb8;"></div>
<svg class="r" style="left:1183.0px;top:823.0px;" width="20" height="20" viewBox="0 0 20 20"><rect x="2.5" y="3" width="15" height="13" fill="#f0f0f0" stroke="#333" stroke-width="1"/><path d="M3 13L7 8L10 11L13 7L17 12V15.5H3Z" fill="#444"/></svg>
<svg class="r" style="left:1201px;top:838px;" width="5" height="7" viewBox="0 0 5 7"><path d="M0 0L5 3.5L0 7Z" fill="#9a9a9a"/></svg>
<div class="r" style="left:1181px;top:853px;width:24px;height:1px;background:#2a2a2a;"></div>
<div class="r" style="left:1183px;top:861px;width:21px;height:25px;background:#5d7da6;box-shadow:inset 0 0 0 1px #6f8fb8;"></div>
<svg class="r" style="left:1183.0px;top:862.0px;" width="20" height="20" viewBox="0 0 20 20"><path d="M10 2A6 6 0 0 1 16 8C16 12 10 18.5 10 18.5C10 18.5 4 12 4 8A6 6 0 0 1 10 2Z" fill="#f0f0f0"/><circle cx="10" cy="8" r="2.6" fill="#9aa8b8"/></svg>
<svg class="r" style="left:1201px;top:878px;" width="5" height="7" viewBox="0 0 5 7"><path d="M0 0L5 3.5L0 7Z" fill="#9a9a9a"/></svg>
<div class="r" style="left:1181px;top:926px;width:24px;height:1px;background:#2a2a2a;"></div>
<svg class="r" style="left:1183.0px;top:933.0px;" width="20" height="20" viewBox="0 0 20 20"><circle cx="10" cy="10" r="7.6" fill="none" stroke="#e2e2e2" stroke-width="1.4"/></svg>
<span class="t" style="left:1191.3px;top:936.0px;font-size:12px;line-height:14px;color:#e2e2e2;font-weight:bold;font-style:italic;font-family:'Liberation Serif',serif;">i</span>
<div class="r" style="left:1183px;top:958px;width:21px;height:24px;background:#5d7da6;box-shadow:inset 0 0 0 1px #6f8fb8;"></div>
<svg class="r" style="left:1183.0px;top:960.0px;" width="20" height="20" viewBox="0 0 20 20"><rect x="3" y="3" width="6" height="6" fill="#f2f2f2" stroke="#e8c020" stroke-width="1.6"/><rect x="11" y="3" width="6" height="6" fill="#f2f2f2" stroke="#e8c020" stroke-width="1.6"/><rect x="3" y="11" width="6" height="6" fill="#f2f2f2" stroke="#e8c020" stroke-width="1.6"/><rect x="11" y="11" width="6" height="6" fill="#f2f2f2" stroke="#e8c020" stroke-width="1.6"/></svg>
<svg class="r" style="left:1183.0px;top:985.5px;" width="20" height="20" viewBox="0 0 20 20"><rect x="2.4" y="2.5" width="15.8" height="15" fill="#ededed"/><path d="M4 10.5C6.5 6 14 6 16.6 10.5C14 14.5 6.5 14.5 4 10.5Z" fill="#fff" stroke="#222" stroke-width="1.1"/><circle cx="10.3" cy="10.3" r="2.8" fill="#111"/><path d="M3.5 8.5C6 4.5 14.5 4.5 17 8.5" stroke="#222" stroke-width="1.2" fill="none"/></svg>
<svg class="r" style="left:1201px;top:1002px;" width="5" height="7" viewBox="0 0 5 7"><path d="M0 0L5 3.5L0 7Z" fill="#9a9a9a"/></svg>
<!-- network -->
<div class="r" style="left:1216px;top:113px;width:704px;height:897px;background:#303030;"></div>
<div class="r" style="left:1216px;top:113px;width:704px;height:7px;background:#454545;box-shadow:inset 0 0 0 1px #333;"></div>
<svg class="r" style="left:1584px;top:115px;" width="8" height="4" viewBox="0 0 8 4"><path d="M0 0H8L4 4Z" fill="#8a8a8a"/></svg>
<svg class="r" style="left:1651px;top:115px;" width="8" height="4" viewBox="0 0 8 4"><path d="M0 0H8L4 4Z" fill="#8a8a8a"/></svg>
<svg class="r" style="left:1613px;top:115px;" width="24" height="5" viewBox="0 0 24 5"><rect x="0" y="0" width="1.3" height="1.3" fill="#8a8a8a"/><rect x="0" y="2.5" width="1.3" height="1.3" fill="#8a8a8a"/><rect x="3" y="0" width="1.3" height="1.3" fill="#8a8a8a"/><rect x="3" y="2.5" width="1.3" height="1.3" fill="#8a8a8a"/><rect x="6" y="0" width="1.3" height="1.3" fill="#8a8a8a"/><rect x="6" y="2.5" width="1.3" height="1.3" fill="#8a8a8a"/><rect x="9" y="0" width="1.3" height="1.3" fill="#8a8a8a"/><rect x="9" y="2.5" width="1.3" height="1.3" fill="#8a8a8a"/><rect x="12" y="0" width="1.3" height="1.3" fill="#8a8a8a"/><rect x="12" y="2.5" width="1.3" height="1.3" fill="#8a8a8a"/><rect x="15" y="0" width="1.3" height="1.3" fill="#8a8a8a"/><rect x="15" y="2.5" width="1.3" height="1.3" fill="#8a8a8a"/><rect x="18" y="0" width="1.3" height="1.3" fill="#8a8a8a"/><rect x="18" y="2.5" width="1.3" height="1.3" fill="#8a8a8a"/><rect x="21" y="0" width="1.3" height="1.3" fill="#8a8a8a"/><rect x="21" y="2.5" width="1.3" height="1.3" fill="#8a8a8a"/></svg>
<div class="r" style="left:1216px;top:120px;width:704px;height:22px;background:#2c2c2c;"></div>
<div class="r" style="left:1216px;top:120px;width:76px;height:22px;background:#3a3a3a;"></div>
<span class="t" style="left:1221.0px;top:124.7px;font-size:12px;line-height:14px;color:#c4c4c4;font-style:italic;transform:scaleX(0.952);">/obj/cup</span>
<svg class="r" style="left:1280.5px;top:129.0px;" width="5" height="5" viewBox="0 0 5 5"><path d="M0.3 0.3L4.7 4.7M4.7 0.3L0.3 4.7" stroke="#cfcfcf" stroke-width="1.5"/></svg>
<div class="r" style="left:1294px;top:121px;width:81px;height:20px;background:#333;box-shadow:0 0 0 1px #1f1f1f;"></div>
<span class="t" style="left:1300.5px;top:124.7px;font-size:12px;line-height:14px;color:#c8c8c8;transform:scaleX(0.872);">Tree View</span>
<svg class="r" style="left:1363.5px;top:129.0px;" width="5" height="5" viewBox="0 0 5 5"><path d="M0.3 0.3L4.7 4.7M4.7 0.3L0.3 4.7" stroke="#cfcfcf" stroke-width="1.5"/></svg>
<div class="r" style="left:1377px;top:121px;width:108px;height:20px;background:#333;box-shadow:0 0 0 1px #1f1f1f;"></div>
<span class="t" style="left:1384.0px;top:124.7px;font-size:12px;line-height:14px;color:#c8c8c8;transform:scaleX(0.912);">Material Palette</span>
<svg class="r" style="left:1473.5px;top:129.0px;" width="5" height="5" viewBox="0 0 5 5"><path d="M0.3 0.3L4.7 4.7M4.7 0.3L0.3 4.7" stroke="#cfcfcf" stroke-width="1.5"/></svg>
<span class="t" style="left:1495.2px;top:119.5px;font-size:18px;line-height:22px;color:#e6e6e6;font-weight:bold;">+</span>
<div class="r" style="left:1216px;top:142px;width:704px;height:34px;background:#3a3a3a;"></div>
<svg class="r" style="left:1221px;top:151px;" width="18" height="18" viewBox="0 0 18 18"><path d="M1 8L9 1V5H16V11H9V15Z" fill="#e6e6e6"/><path d="M13 12L17.5 15L13 18Z" fill="#9a9a9a"/></svg>
<svg class="r" style="left:1247px;top:152px;" width="16" height="14" viewBox="0 0 16 14"><path d="M15 7L8 1V4.5H1V9.5H8V13Z" fill="#5a5a5a"/></svg>
<div class="r" style="left:1273px;top:147px;width:660px;height:26px;background:#2f2f2f;box-shadow:inset 0 0 0 1px #161616;"></div>
<svg class="r" style="left:1281px;top:150px;" width="17" height="18" viewBox="0 0 17 18"><path d="M1 7H16V17H1Z" fill="#9a9a9a"/><path d="M1 7H16V9.5H1Z" fill="#6c6c6c"/><path d="M1 3L15 0.5L15.6 3.6L1.6 6.2Z" fill="#cfcfcf"/><path d="M4 2.4L5.6 5.4M8 1.7L9.6 4.7M12 1L13.6 4" stroke="#4a4a4a" stroke-width="1.4"/><path d="M3 11H9M3 14H12" stroke="#c8c8c8" stroke-width="1.3"/></svg>
<span class="t" style="left:1304.0px;top:152.0px;font-size:13px;line-height:16px;color:#dcdcdc;transform:scaleX(0.951);">obj</span>
<svg class="r" style="left:1323px;top:148px;" width="9" height="24" viewBox="0 0 9 24"><path d="M1 0L7 12L1 24" stroke="#1a1a1a" stroke-width="1.2" fill="none"/></svg>
<svg class="r" style="left:1338px;top:151px;" width="20" height="18" viewBox="0 0 20 18"><path d="M2 2H8V14H2Z" fill="#3d78d8"/><ellipse cx="5" cy="2.5" rx="3" ry="1.3" fill="#7fb0f0"/><circle cx="14.5" cy="10" r="5" fill="#e0302a"/><path d="M9 4L15 17H3Z" fill="#f2d02a"/><path d="M9 4L11 17H3Z" fill="#fff08a"/></svg>
<span class="t" style="left:1361.0px;top:152.0px;font-size:13px;line-height:16px;color:#dcdcdc;transform:scaleX(0.954);">cup</span>
<div class="r" style="left:1216px;top:176px;width:704px;height:2px;background:#1c1c1c;"></div>
<div class="r" style="left:1216px;top:178px;width:704px;height:27px;background:#343434;"></div>
<div class="r" style="left:1216px;top:178px;width:10px;height:27px;background:#4a4a4a;box-shadow:inset -1px 0 0 #222;"></div>
<svg class="r" style="left:1217px;top:179px;" width="7" height="6" viewBox="0 0 7 6"><path d="M3.5 0L7 6H0Z" fill="#0c0c0c"/></svg>
<span class="t" style="left:1235.0px;top:183.5px;font-size:14.5px;line-height:17px;color:#d0d0d0;transform:scaleX(0.872);">Add</span>
<span class="t" style="left:1274.0px;top:183.5px;font-size:14.5px;line-height:17px;color:#d0d0d0;transform:scaleX(0.921);">Edit</span>
<span class="t" style="left:1313.0px;top:183.5px;font-size:14.5px;line-height:17px;color:#d0d0d0;transform:scaleX(0.827);">Go</span>
<span class="t" style="left:1345.6px;top:183.5px;font-size:14.5px;line-height:17px;color:#d0d0d0;transform:scaleX(0.882);">View</span>
<span class="t" style="left:1389.7px;top:183.5px;font-size:14.5px;line-height:17px;color:#d0d0d0;transform:scaleX(0.916);">Tools</span>
<span class="t" style="left:1437.0px;top:183.5px;font-size:14.5px;line-height:17px;color:#d0d0d0;transform:scaleX(0.919);">Layout</span>
<span class="t" style="left:1490.4px;top:183.5px;font-size:14.5px;line-height:17px;color:#d0d0d0;transform:scaleX(0.859);">Labs</span>
<span class="t" style="left:1531.0px;top:183.5px;font-size:14.5px;line-height:17px;color:#d0d0d0;transform:scaleX(0.892);">Help</span>
<div class="r" style="left:1216px;top:205px;width:704px;height:1px;background:#1c1c1c;"></div>
<svg class="r" style="left:1690px;top:183px;" width="18" height="18" viewBox="0 0 18 18"><path d="M2 16L15 2" stroke="#e6e6e6" stroke-width="2.6"/><path d="M2 3L7 8M7 8L15 16" stroke="#e6e6e6" stroke-width="2.8"/><circle cx="3.5" cy="3.5" r="3" fill="#e6e6e6"/><circle cx="2.5" cy="2.5" r="1.6" fill="#343434"/><path d="M12 12L16 16" stroke="#9a9a9a" stroke-width="3"/></svg>
<svg class="r" style="left:1718px;top:184px;" width="14" height="17" viewBox="0 0 14 17"><rect x="0" y="0" width="4" height="4" fill="#d8d8d8"/><path d="M2 4V15H8M2 7H8M2 11H8" stroke="#d8d8d8" stroke-width="1.4" fill="none"/><rect x="8" y="5.3" width="4" height="3.2" fill="#d8d8d8"/><rect x="8" y="9.3" width="4" height="3.2" fill="#d8d8d8"/><rect x="8" y="13.3" width="4" height="3.2" fill="#d8d8d8"/></svg>
<svg class="r" style="left:1744px;top:184px;" width="14" height="16" viewBox="0 0 14 16"><rect width="14" height="16" fill="#e2e2dc"/><path d="M0 4H14M0 8H14M0 12H14" stroke="#b8b8b0" stroke-width="1"/></svg>
<svg class="r" style="left:1787.5px;top:184.5px;" width="15" height="15" viewBox="0 0 15 15"><rect width="15" height="15" fill="#f0f0ea"/><rect x="1.0" y="1.0" width="3.6" height="3.6" fill="#c01818"/><rect x="5.5" y="1.0" width="3.6" height="3.6" fill="#e88a1c"/><rect x="10.0" y="1.0" width="3.6" height="3.6" fill="#e8d020"/><rect x="1.0" y="5.5" width="3.6" height="3.6" fill="#1c4a9a"/><rect x="5.5" y="5.5" width="3.6" height="3.6" fill="#4cae2c"/><rect x="10.0" y="5.5" width="3.6" height="3.6" fill="#8ab0d8"/><rect x="1.0" y="10.0" width="3.6" height="3.6" fill="#111"/><rect x="5.5" y="10.0" width="3.6" height="3.6" fill="#8a8a8a"/><rect x="10.0" y="10.0" width="3.6" height="3.6" fill="#e6e6e0"/></svg>
<svg class="r" style="left:1813.5px;top:184px;" width="16" height="16" viewBox="0 0 16 16"><rect x=".6" y=".6" width="14.8" height="14.8" fill="#3a3a3a" stroke="#8a8a8a" stroke-width="1.2"/><rect x="2.5" y="2.2" width="4" height="2" fill="#d0d0d0"/><rect x="2.5" y="6.6000000000000005" width="4" height="2" fill="#d0d0d0"/><rect x="2.5" y="11.0" width="4" height="2" fill="#d0d0d0"/><rect x="9.0" y="2.2" width="4" height="2" fill="#d0d0d0"/><rect x="9.0" y="6.6000000000000005" width="4" height="2" fill="#d0d0d0"/><rect x="9.0" y="11.0" width="4" height="2" fill="#d0d0d0"/></svg>
<svg class="r" style="left:1857.5px;top:184.5px;" width="15" height="15" viewBox="0 0 15 15"><rect width="15" height="15" fill="#e6e6e2"/><rect y="0" width="15" height="2" fill="#666"/><rect x="2" y="4.5" width="7" height="3.6" rx="1" fill="#fff" stroke="#222" stroke-width="1.2"/><rect x="6.5" y="10" width="7" height="3.6" rx="1" fill="#fff" stroke="#222" stroke-width="1.2"/></svg>
<svg class="r" style="left:1882.5px;top:183.5px;" width="17" height="17" viewBox="0 0 17 17"><path d="M0 0H17V11L11 17H0Z" fill="#f0d838"/><path d="M17 11H11V17Z" fill="#c8a818"/><path d="M3 4H13M3 7H11M3 10H9" stroke="#6a5a10" stroke-width="1.3"/></svg>
<svg class="r" style="left:1908.5px;top:183.5px;" width="12" height="17" viewBox="0 0 12 17"><rect width="17" height="17" fill="#5aa8e8"/><rect x="1.2" y="1.2" width="14.6" height="14.6" fill="none" stroke="#d8e8f4" stroke-width="1"/><circle cx="5" cy="5" r="2" fill="#f0e040"/><path d="M1 14L6 9L12 16H1Z" fill="#3a9a3a"/></svg>
<span class="t" style="left:1501.0px;top:219.0px;font-size:22px;line-height:26px;color:#414141;transform:scaleX(0.990);">Non-Commercial Edition</span>
<span class="t" style="left:1892.0px;top:222.0px;font-size:27px;line-height:32px;color:#555;font-weight:bold;transform:scaleX(1.055);">Ge</span>
<div class="r" style="left:1385px;top:282.5px;width:288px;height:157.5px;background:#24497a;border-radius:4px;"></div>
<div class="r" style="left:1385px;top:282.5px;width:288px;height:14px;background:#1f5a9f;border-radius:4px 4px 0 0;"></div>
<div class="r" style="left:1389px;top:289px;width:7px;height:1.2px;background:#0f2a4a;"></div>
<span class="t" style="left:1401.0px;top:283.3px;font-size:9.5px;line-height:11px;color:#dfe8f4;transform:scaleX(0.936);">Starting Shapes | Created pressing "Shift+O"</span>
<div class="r" style="left:1385px;top:473px;width:288px;height:374px;background:#3f3762;border-radius:4px;"></div>
<div class="r" style="left:1385px;top:473px;width:288px;height:14.5px;background:#4b3e88;border-radius:4px 4px 0 0;"></div>
<div class="r" style="left:1389px;top:480px;width:7px;height:1.2px;background:#2a2250;"></div>
<span class="t" style="left:1401.0px;top:474.3px;font-size:9.5px;line-height:11px;color:#e4e0f2;transform:scaleX(0.958);">Polygon Tools</span>
<div class="r" style="left:1708px;top:282.5px;width:114px;height:123.5px;background:#c9bf66;border-radius:5px;"></div>
<div class="r" style="left:1708px;top:282.5px;width:114px;height:10px;background:#e9df80;border-radius:5px 5px 0 0;"></div>
<div class="r" style="left:1712px;top:286.2px;width:7px;height:1.4px;background:#3a3510;"></div>
<span class="t" style="left:1711.0px;top:298.3px;font-size:9.5px;line-height:11px;color:#2b2a12;transform:scaleX(0.924);">These shapes are starting</span>
<span class="t" style="left:1711.0px;top:310.4px;font-size:9.5px;line-height:11px;color:#2b2a12;transform:scaleX(0.982);">point for the final look of</span>
<span class="t" style="left:1711.0px;top:322.5px;font-size:9.5px;line-height:11px;color:#2b2a12;transform:scaleX(0.921);">the cup. We have two</span>
<span class="t" style="left:1711.0px;top:334.8px;font-size:9.5px;line-height:11px;color:#2b2a12;transform:scaleX(0.908);">versions.</span>
<span class="t" style="left:1711.0px;top:359.0px;font-size:9.5px;line-height:11px;color:#2b2a12;transform:scaleX(0.927);">NOTE: Creating "Shift+P"</span>
<span class="t" style="left:1711.0px;top:371.1px;font-size:9.5px;line-height:11px;color:#2b2a12;transform:scaleX(0.947);">allows us to create this</span>
<span class="t" style="left:1711.0px;top:383.2px;font-size:9.5px;line-height:11px;color:#2b2a12;transform:scaleX(0.947);">note card.</span>
<svg class="r" style="left:1216px;top:206px;" width="704" height="804" viewBox="1216 206 704 804"><path d="M1425.6 324V347" stroke="#4f78b8" stroke-width="1.2"/><path d="M1587 324V347" stroke="#4f78b8" stroke-width="1.2"/><path d="M1425.6 372C1426 386 1440 384 1470 385.5C1495 386.5 1502 386 1507 393" stroke="#4f78b8" stroke-width="1.3" fill="none"/><path d="M1587 372C1587 384 1570 383 1550 385C1530 386.5 1522 388 1518 393" stroke="#5f86b8" stroke-width="1.2" fill="none" stroke-dasharray="1.2 2.6"/><path d="M1512.5 426C1513 450 1517.5 470 1518.6 509" stroke="#4f78b8" stroke-width="1.1" fill="none"/><path d="M1518.7 530L1518.7 553.9" stroke="#8592d6" stroke-width="1"/><path d="M1518.7 574.9L1509.5 598.7" stroke="#8592d6" stroke-width="1"/><path d="M1518.7 619.7L1518.7 643.5" stroke="#8592d6" stroke-width="1"/><path d="M1518.7 664.5L1509.5 688.7" stroke="#8592d6" stroke-width="1"/><path d="M1518.7 709.7L1509.5 733.2" stroke="#8592d6" stroke-width="1"/><path d="M1518.7 754.2L1509.5 778.3" stroke="#8592d6" stroke-width="1"/><path d="M1518.7 799.3L1509.5 823" stroke="#8592d6" stroke-width="1"/><path d="M1518.7 844L1509.5 867.2" stroke="#8592d6" stroke-width="1"/><path d="M1518.7 888V913" stroke="#6f8fd0" stroke-width="1.2"/></svg>
<svg class="r" style="left:1402.3999999999999px;top:302.20000000000005px;" width="46.4" height="20" viewBox="0 0 46.4 20"><path d="M1.5 0.8L23.2 4.8L44.9 0.8Q46.4 0.8 46.4 2.2V12.6Q46.4 13.8 45 14.2L23.2 19.4L1.4 14.2Q0 13.8 0 12.6V2.2Q0 0.8 1.5 0.8Z" fill="#f6bd2c"/><path d="M6.4 1.6L4.6 15.4" stroke="#ffdf80" stroke-width="1.2"/><path d="M11.4 2.5L9.6 16.6" stroke="#ffdf80" stroke-width="1.2"/><path d="M16.4 3.4L14.6 17.7" stroke="#ffdf80" stroke-width="1.2"/><path d="M31.799999999999997 3.4L30.0 17.7" stroke="#ffdf80" stroke-width="1.2"/><path d="M36.8 2.5L35.0 16.6" stroke="#ffdf80" stroke-width="1.2"/><path d="M41.8 1.6L40.0 15.4" stroke="#ffdf80" stroke-width="1.2"/><path d="M20.6 7A2.6 1.3 0 0 1 25.8 7V15A2.6 1.3 0 0 1 20.6 15Z" fill="#bfc6c9" stroke="#7a8488" stroke-width=".6"/><ellipse cx="23.2" cy="7" rx="2.6" ry="1.2" fill="#e2e6e8"/></svg>
<svg class="r" style="left:1563.6px;top:302.20000000000005px;" width="46.4" height="20" viewBox="0 0 46.4 20"><path d="M1.5 0.8L23.2 4.8L44.9 0.8Q46.4 0.8 46.4 2.2V12.6Q46.4 13.8 45 14.2L23.2 19.4L1.4 14.2Q0 13.8 0 12.6V2.2Q0 0.8 1.5 0.8Z" fill="#fa0808"/><path d="M6.4 1.6L4.6 15.4" stroke="#c40000" stroke-width="1.2"/><path d="M11.4 2.5L9.6 16.6" stroke="#c40000" stroke-width="1.2"/><path d="M16.4 3.4L14.6 17.7" stroke="#c40000" stroke-width="1.2"/><path d="M31.799999999999997 3.4L30.0 17.7" stroke="#c40000" stroke-width="1.2"/><path d="M36.8 2.5L35.0 16.6" stroke="#c40000" stroke-width="1.2"/><path d="M41.8 1.6L40.0 15.4" stroke="#c40000" stroke-width="1.2"/><path d="M20.6 7A2.6 1.3 0 0 1 25.8 7V15A2.6 1.3 0 0 1 20.6 15Z" fill="#bfc6c9" stroke="#7a8488" stroke-width=".6"/><ellipse cx="23.2" cy="7" rx="2.6" ry="1.2" fill="#e2e6e8"/></svg>
<svg class="r" style="left:1402.3999999999999px;top:344.4px;" width="46.4" height="26" viewBox="0 -0.5 46.4 26"><path d="M1.2 8.4L13.5 9L10.8 3.6L17.3 6.6L18.6 0.8L22.2 5.4L25.2 0L27.4 5.6L32.4 2.2L31.2 8L34.2 9L45.2 8.4Q46.4 8.6 46.4 9.8V16Q46.4 17.2 45.2 17.4L33.8 17.2L34.6 22L29.6 19.4L28.4 24.6L23.6 20.6L19.6 25L18.2 19.6L12.6 22.4L13.4 17.2L1.2 17.4Q0 17.2 0 16V9.8Q0 8.6 1.2 8.4Z" fill="#f6bd2c"/><path d="M5.3 8.8L3.8999999999999995 17" stroke="#ffdf80" stroke-width="1.2"/><path d="M10.1 8.8L8.700000000000001 17" stroke="#ffdf80" stroke-width="1.2"/><path d="M37.7 8.8L36.3 17" stroke="#ffdf80" stroke-width="1.2"/><path d="M42.5 8.8L41.099999999999994 17" stroke="#ffdf80" stroke-width="1.2"/><path d="M19.6 8.6L22.2 7.2L28.6 13.4L26 16.2Z" fill="#e6eaec" stroke="#8a8f92" stroke-width=".6"/><path d="M19.6 8.6L22.2 7.2L24 9L21.4 10.6Z" fill="#fafafa"/></svg>
<svg class="r" style="left:1563.6px;top:344.4px;" width="46.4" height="26" viewBox="0 -0.5 46.4 26"><path d="M1.2 8.4L13.5 9L10.8 3.6L17.3 6.6L18.6 0.8L22.2 5.4L25.2 0L27.4 5.6L32.4 2.2L31.2 8L34.2 9L45.2 8.4Q46.4 8.6 46.4 9.8V16Q46.4 17.2 45.2 17.4L33.8 17.2L34.6 22L29.6 19.4L28.4 24.6L23.6 20.6L19.6 25L18.2 19.6L12.6 22.4L13.4 17.2L1.2 17.4Q0 17.2 0 16V9.8Q0 8.6 1.2 8.4Z" fill="#fa0808"/><path d="M5.3 8.8L3.8999999999999995 17" stroke="#c40000" stroke-width="1.2"/><path d="M10.1 8.8L8.700000000000001 17" stroke="#c40000" stroke-width="1.2"/><path d="M37.7 8.8L36.3 17" stroke="#c40000" stroke-width="1.2"/><path d="M42.5 8.8L41.099999999999994 17" stroke="#c40000" stroke-width="1.2"/><path d="M19.6 8.6L22.2 7.2L28.6 13.4L26 16.2Z" fill="#e6eaec" stroke="#8a8f92" stroke-width=".6"/><path d="M19.6 8.6L22.2 7.2L24 9L21.4 10.6Z" fill="#fafafa"/></svg>
<svg class="r" style="left:1423.1999999999998px;top:300.40000000000003px;" width="4.8" height="4.8" viewBox="0 0 4.8 4.8"><circle cx="2.4" cy="2.4" r="2.4" fill="#bcc0d0"/></svg>
<svg class="r" style="left:1423.1999999999998px;top:322.1px;" width="4.8" height="4.8" viewBox="0 0 4.8 4.8"><circle cx="2.4" cy="2.4" r="2.4" fill="#bcc0d0"/></svg>
<svg class="r" style="left:1423.1999999999998px;top:338.6px;" width="4.8" height="4.8" viewBox="0 0 4.8 4.8"><circle cx="2.4" cy="2.4" r="2.4" fill="#bcc0d0"/></svg>
<svg class="r" style="left:1423.1999999999998px;top:370.1px;" width="4.8" height="4.8" viewBox="0 0 4.8 4.8"><circle cx="2.4" cy="2.4" r="2.4" fill="#bcc0d0"/></svg>
<svg class="r" style="left:1584.3999999999999px;top:300.40000000000003px;" width="4.8" height="4.8" viewBox="0 0 4.8 4.8"><circle cx="2.4" cy="2.4" r="2.4" fill="#bcc0d0"/></svg>
<svg class="r" style="left:1584.3999999999999px;top:322.1px;" width="4.8" height="4.8" viewBox="0 0 4.8 4.8"><circle cx="2.4" cy="2.4" r="2.4" fill="#bcc0d0"/></svg>
<svg class="r" style="left:1584.3999999999999px;top:338.6px;" width="4.8" height="4.8" viewBox="0 0 4.8 4.8"><circle cx="2.4" cy="2.4" r="2.4" fill="#bcc0d0"/></svg>
<svg class="r" style="left:1584.3999999999999px;top:370.1px;" width="4.8" height="4.8" viewBox="0 0 4.8 4.8"><circle cx="2.4" cy="2.4" r="2.4" fill="#bcc0d0"/></svg>
<span class="t" style="left:1452.5px;top:305.0px;font-size:9.5px;line-height:11px;color:#c9c9d6;transform:scaleX(0.947);">tube1</span>
<span class="t" style="left:1452.5px;top:348.7px;font-size:9.5px;line-height:11px;color:#c9c9d6;transform:scaleX(0.986);">color1</span>
<span class="t" style="left:1614.0px;top:305.0px;font-size:9.5px;line-height:11px;color:#c9c9d6;transform:scaleX(0.989);">tube2</span>
<span class="t" style="left:1614.0px;top:348.7px;font-size:9.5px;line-height:11px;color:#c9c9d6;">color2</span>
<svg class="r" style="left:1455px;top:364px;" width="7" height="6" viewBox="0 0 7 6"><rect x=".5" y="1" width="6" height="4.5" rx="1" fill="#8a8458"/></svg>
<svg class="r" style="left:1616.5px;top:364px;" width="7" height="6" viewBox="0 0 7 6"><rect x=".5" y="1" width="6" height="4.5" rx="1" fill="#8a8458"/></svg>
<svg class="r" style="left:1495px;top:390px;" width="36" height="34" viewBox="0 0 36 34"><path d="M3 12A15.5 12 0 0 1 33 12" fill="none" stroke="#a8a8a8" stroke-width="4.2" stroke-linecap="round"/><circle cx="17.5" cy="19" r="13.2" fill="#c4f29a" stroke="#8ad05a" stroke-width="1.2"/><circle cx="17.5" cy="19" r="8.2" fill="none" stroke="#5fb83a" stroke-width="1.6"/><path d="M17.5 6V11M17.5 27V32M4.5 19H9.5M25.5 19H30.5" stroke="#5fb83a" stroke-width="1.4"/><rect x="13.5" y="17" width="8" height="4" rx="1" fill="#d8e0d0" stroke="#7a8a70" stroke-width=".6"/></svg>
<svg class="r" style="left:1510.1px;top:424.1px;" width="4.8" height="4.8" viewBox="0 0 4.8 4.8"><circle cx="2.4" cy="2.4" r="2.4" fill="#bcc0d0"/></svg>
<span class="t" style="left:1530.0px;top:401.5px;font-size:9.5px;line-height:11px;color:#c9c9d6;transform:scaleX(0.947);">switch1</span>
<svg class="r" style="left:1531.5px;top:415.5px;" width="9" height="8" viewBox="0 0 9 8"><path d="M1 0.5H8A1 1 0 0 1 9 1.5V4.5A1 1 0 0 1 8 5.5H4L1.5 8V5.5H1A1 1 0 0 1 0 4.5V1.5A1 1 0 0 1 1 0.5Z" fill="#1f9aa8"/></svg>
<span class="t" style="left:1530.0px;top:425.0px;font-size:8.5px;line-height:10px;color:#5c8fc0;transform:scaleX(0.960);">Switch between cups | 0 = Tube1 | 1</span>
<span class="t" style="left:1530.0px;top:436.8px;font-size:8.5px;line-height:10px;color:#5c8fc0;transform:scaleX(0.953);">= Tube2</span>
<svg class="r" style="left:1490px;top:490.5px;" width="58" height="58" viewBox="0 0 58 58"><circle cx="29" cy="29" r="28.3" fill="#4a67b4"/><circle cx="29" cy="29" r="18.3" fill="#8a5cc8"/></svg>
<svg class="r" style="left:1516px;top:500px;" width="6" height="12" viewBox="0 0 6 12"><path d="M3 0V12" stroke="#6f8fd0" stroke-width="1"/></svg>
<svg class="r" style="left:1495.5px;top:511.6px;" width="46.4" height="14.8" viewBox="0 0 46.4 14.8"><rect x="0.6" y="0.6" width="45.199999999999996" height="13.600000000000001" rx="2" fill="#dededa" stroke="#b4b4ae" stroke-width="1.2"/><path d="M6.699999999999999 1.4L4.699999999999999 13.4" stroke="#96968e" stroke-width="1"/><path d="M7.8 1.4L5.8 13.4" stroke="#f6f6f2" stroke-width="1"/><path d="M12.7 1.4L10.7 13.4" stroke="#96968e" stroke-width="1"/><path d="M13.8 1.4L11.799999999999999 13.4" stroke="#f6f6f2" stroke-width="1"/><path d="M18.700000000000003 1.4L16.700000000000003 13.4" stroke="#96968e" stroke-width="1"/><path d="M19.8 1.4L17.8 13.4" stroke="#f6f6f2" stroke-width="1"/><path d="M30.5 1.4L28.5 13.4" stroke="#96968e" stroke-width="1"/><path d="M31.599999999999998 1.4L29.599999999999998 13.4" stroke="#f6f6f2" stroke-width="1"/><path d="M36.300000000000004 1.4L34.300000000000004 13.4" stroke="#96968e" stroke-width="1"/><path d="M37.400000000000006 1.4L35.400000000000006 13.4" stroke="#f6f6f2" stroke-width="1"/><path d="M42.1 1.4L40.1 13.4" stroke="#96968e" stroke-width="1"/><path d="M43.2 1.4L41.2 13.4" stroke="#f6f6f2" stroke-width="1"/><path d="M19 3L27 2.5L28.5 9L24 12L18.5 9Z" fill="#f09a20"/><circle cx="23.5" cy="7" r="2" fill="#ffe070"/><rect x="41.0" y="1.4" width="4.2" height="12.0" rx="1" fill="#1ea7f0"/></svg>
<svg class="r" style="left:1516.3px;top:506.40000000000003px;" width="4.8" height="4.8" viewBox="0 0 4.8 4.8"><circle cx="2.4" cy="2.4" r="2.4" fill="#bcc0d0"/></svg>
<svg class="r" style="left:1516.3px;top:527.4px;" width="4.8" height="4.8" viewBox="0 0 4.8 4.8"><circle cx="2.4" cy="2.4" r="2.4" fill="#bcc0d0"/></svg>
<span class="t" style="left:1546.0px;top:512.5px;font-size:9.5px;line-height:11px;color:#c9c9d6;transform:scaleX(0.994);">polyfill1</span>
<svg class="r" style="left:1495.5px;top:556.5px;" width="46.4" height="14.8" viewBox="0 0 46.4 14.8"><rect x="0.6" y="0.6" width="45.199999999999996" height="13.600000000000001" rx="2" fill="#dededa" stroke="#b4b4ae" stroke-width="1.2"/><path d="M6.699999999999999 1.4L4.699999999999999 13.4" stroke="#96968e" stroke-width="1"/><path d="M7.8 1.4L5.8 13.4" stroke="#f6f6f2" stroke-width="1"/><path d="M12.7 1.4L10.7 13.4" stroke="#96968e" stroke-width="1"/><path d="M13.8 1.4L11.799999999999999 13.4" stroke="#f6f6f2" stroke-width="1"/><path d="M18.700000000000003 1.4L16.700000000000003 13.4" stroke="#96968e" stroke-width="1"/><path d="M19.8 1.4L17.8 13.4" stroke="#f6f6f2" stroke-width="1"/><path d="M30.5 1.4L28.5 13.4" stroke="#96968e" stroke-width="1"/><path d="M31.599999999999998 1.4L29.599999999999998 13.4" stroke="#f6f6f2" stroke-width="1"/><path d="M36.300000000000004 1.4L34.300000000000004 13.4" stroke="#96968e" stroke-width="1"/><path d="M37.400000000000006 1.4L35.400000000000006 13.4" stroke="#f6f6f2" stroke-width="1"/><path d="M42.1 1.4L40.1 13.4" stroke="#96968e" stroke-width="1"/><path d="M43.2 1.4L41.2 13.4" stroke="#f6f6f2" stroke-width="1"/><path d="M17 9L23 4L29 9L23 11.5Z" fill="#e06060"/><path d="M17 9.5L23 12L29 9.5" stroke="#6a8ad0" stroke-width="1.2" fill="none"/></svg>
<svg class="r" style="left:1516.3px;top:551.3px;" width="4.8" height="4.8" viewBox="0 0 4.8 4.8"><circle cx="2.4" cy="2.4" r="2.4" fill="#bcc0d0"/></svg>
<svg class="r" style="left:1516.3px;top:572.3px;" width="4.8" height="4.8" viewBox="0 0 4.8 4.8"><circle cx="2.4" cy="2.4" r="2.4" fill="#bcc0d0"/></svg>
<span class="t" style="left:1546.0px;top:557.4px;font-size:9.5px;line-height:11px;color:#c9c9d6;transform:scaleX(0.980);">softtransform1</span>
<svg class="r" style="left:1495.5px;top:601.3000000000001px;" width="46.4" height="14.8" viewBox="0 0 46.4 14.8"><rect x="0.6" y="0.6" width="45.199999999999996" height="13.600000000000001" rx="2" fill="#dededa" stroke="#b4b4ae" stroke-width="1.2"/><path d="M6.699999999999999 1.4L4.699999999999999 13.4" stroke="#96968e" stroke-width="1"/><path d="M7.8 1.4L5.8 13.4" stroke="#f6f6f2" stroke-width="1"/><path d="M12.7 1.4L10.7 13.4" stroke="#96968e" stroke-width="1"/><path d="M13.8 1.4L11.799999999999999 13.4" stroke="#f6f6f2" stroke-width="1"/><path d="M18.700000000000003 1.4L16.700000000000003 13.4" stroke="#96968e" stroke-width="1"/><path d="M19.8 1.4L17.8 13.4" stroke="#f6f6f2" stroke-width="1"/><path d="M30.5 1.4L28.5 13.4" stroke="#96968e" stroke-width="1"/><path d="M31.599999999999998 1.4L29.599999999999998 13.4" stroke="#f6f6f2" stroke-width="1"/><path d="M36.300000000000004 1.4L34.300000000000004 13.4" stroke="#96968e" stroke-width="1"/><path d="M37.400000000000006 1.4L35.400000000000006 13.4" stroke="#f6f6f2" stroke-width="1"/><path d="M42.1 1.4L40.1 13.4" stroke="#96968e" stroke-width="1"/><path d="M43.2 1.4L41.2 13.4" stroke="#f6f6f2" stroke-width="1"/><circle cx="22.5" cy="6.5" r="4" fill="#f4c82a"/><path d="M24 8L28.5 12" stroke="#d06a20" stroke-width="2"/></svg>
<svg class="r" style="left:1507.1px;top:596.1px;" width="4.8" height="4.8" viewBox="0 0 4.8 4.8"><circle cx="2.4" cy="2.4" r="2.4" fill="#bcc0d0"/></svg>
<svg class="r" style="left:1525.6px;top:596.1px;" width="4.8" height="4.8" viewBox="0 0 4.8 4.8"><circle cx="2.4" cy="2.4" r="2.4" fill="#bcc0d0"/></svg>
<svg class="r" style="left:1516.3px;top:617.1px;" width="4.8" height="4.8" viewBox="0 0 4.8 4.8"><circle cx="2.4" cy="2.4" r="2.4" fill="#bcc0d0"/></svg>
<span class="t" style="left:1546.0px;top:602.2px;font-size:9.5px;line-height:11px;color:#c9c9d6;transform:scaleX(0.965);">polyextrude1</span>
<svg class="r" style="left:1495.5px;top:646.1px;" width="46.4" height="14.8" viewBox="0 0 46.4 14.8"><rect x="0.6" y="0.6" width="45.199999999999996" height="13.600000000000001" rx="2" fill="#dededa" stroke="#b4b4ae" stroke-width="1.2"/><path d="M6.699999999999999 1.4L4.699999999999999 13.4" stroke="#96968e" stroke-width="1"/><path d="M7.8 1.4L5.8 13.4" stroke="#f6f6f2" stroke-width="1"/><path d="M12.7 1.4L10.7 13.4" stroke="#96968e" stroke-width="1"/><path d="M13.8 1.4L11.799999999999999 13.4" stroke="#f6f6f2" stroke-width="1"/><path d="M18.700000000000003 1.4L16.700000000000003 13.4" stroke="#96968e" stroke-width="1"/><path d="M19.8 1.4L17.8 13.4" stroke="#f6f6f2" stroke-width="1"/><path d="M30.5 1.4L28.5 13.4" stroke="#96968e" stroke-width="1"/><path d="M31.599999999999998 1.4L29.599999999999998 13.4" stroke="#f6f6f2" stroke-width="1"/><path d="M36.300000000000004 1.4L34.300000000000004 13.4" stroke="#96968e" stroke-width="1"/><path d="M37.400000000000006 1.4L35.400000000000006 13.4" stroke="#f6f6f2" stroke-width="1"/><path d="M42.1 1.4L40.1 13.4" stroke="#96968e" stroke-width="1"/><path d="M43.2 1.4L41.2 13.4" stroke="#f6f6f2" stroke-width="1"/><circle cx="23" cy="7.2" r="4" fill="#f4c060"/><circle cx="23" cy="7.2" r="2" fill="#d88a30"/></svg>
<svg class="r" style="left:1516.3px;top:640.9px;" width="4.8" height="4.8" viewBox="0 0 4.8 4.8"><circle cx="2.4" cy="2.4" r="2.4" fill="#bcc0d0"/></svg>
<svg class="r" style="left:1516.3px;top:661.9px;" width="4.8" height="4.8" viewBox="0 0 4.8 4.8"><circle cx="2.4" cy="2.4" r="2.4" fill="#bcc0d0"/></svg>
<span class="t" style="left:1546.0px;top:647.0px;font-size:9.5px;line-height:11px;color:#c9c9d6;transform:scaleX(0.906);">reverse1</span>
<svg class="r" style="left:1495.5px;top:691.3000000000001px;" width="46.4" height="14.8" viewBox="0 0 46.4 14.8"><rect x="0.6" y="0.6" width="45.199999999999996" height="13.600000000000001" rx="2" fill="#dededa" stroke="#b4b4ae" stroke-width="1.2"/><path d="M6.699999999999999 1.4L4.699999999999999 13.4" stroke="#96968e" stroke-width="1"/><path d="M7.8 1.4L5.8 13.4" stroke="#f6f6f2" stroke-width="1"/><path d="M12.7 1.4L10.7 13.4" stroke="#96968e" stroke-width="1"/><path d="M13.8 1.4L11.799999999999999 13.4" stroke="#f6f6f2" stroke-width="1"/><path d="M18.700000000000003 1.4L16.700000000000003 13.4" stroke="#96968e" stroke-width="1"/><path d="M19.8 1.4L17.8 13.4" stroke="#f6f6f2" stroke-width="1"/><path d="M30.5 1.4L28.5 13.4" stroke="#96968e" stroke-width="1"/><path d="M31.599999999999998 1.4L29.599999999999998 13.4" stroke="#f6f6f2" stroke-width="1"/><path d="M36.300000000000004 1.4L34.300000000000004 13.4" stroke="#96968e" stroke-width="1"/><path d="M37.400000000000006 1.4L35.400000000000006 13.4" stroke="#f6f6f2" stroke-width="1"/><path d="M42.1 1.4L40.1 13.4" stroke="#96968e" stroke-width="1"/><path d="M43.2 1.4L41.2 13.4" stroke="#f6f6f2" stroke-width="1"/><path d="M19 10L22 2.5L28 5L26 12Z" fill="#f0e030"/><circle cx="21" cy="9.5" r="2" fill="#2a4aa8"/><circle cx="26.5" cy="4.5" r="2" fill="#2a4aa8"/></svg>
<svg class="r" style="left:1507.1px;top:686.1px;" width="4.8" height="4.8" viewBox="0 0 4.8 4.8"><circle cx="2.4" cy="2.4" r="2.4" fill="#bcc0d0"/></svg>
<svg class="r" style="left:1525.6px;top:686.1px;" width="4.8" height="4.8" viewBox="0 0 4.8 4.8"><circle cx="2.4" cy="2.4" r="2.4" fill="#bcc0d0"/></svg>
<svg class="r" style="left:1516.3px;top:707.1px;" width="4.8" height="4.8" viewBox="0 0 4.8 4.8"><circle cx="2.4" cy="2.4" r="2.4" fill="#bcc0d0"/></svg>
<span class="t" style="left:1546.0px;top:692.2px;font-size:9.5px;line-height:11px;color:#c9c9d6;transform:scaleX(0.977);">polybridge1</span>
<svg class="r" style="left:1495.5px;top:735.8000000000001px;" width="46.4" height="14.8" viewBox="0 0 46.4 14.8"><rect x="0.6" y="0.6" width="45.199999999999996" height="13.600000000000001" rx="2" fill="#dededa" stroke="#b4b4ae" stroke-width="1.2"/><path d="M6.699999999999999 1.4L4.699999999999999 13.4" stroke="#96968e" stroke-width="1"/><path d="M7.8 1.4L5.8 13.4" stroke="#f6f6f2" stroke-width="1"/><path d="M12.7 1.4L10.7 13.4" stroke="#96968e" stroke-width="1"/><path d="M13.8 1.4L11.799999999999999 13.4" stroke="#f6f6f2" stroke-width="1"/><path d="M18.700000000000003 1.4L16.700000000000003 13.4" stroke="#96968e" stroke-width="1"/><path d="M19.8 1.4L17.8 13.4" stroke="#f6f6f2" stroke-width="1"/><path d="M30.5 1.4L28.5 13.4" stroke="#96968e" stroke-width="1"/><path d="M31.599999999999998 1.4L29.599999999999998 13.4" stroke="#f6f6f2" stroke-width="1"/><path d="M36.300000000000004 1.4L34.300000000000004 13.4" stroke="#96968e" stroke-width="1"/><path d="M37.400000000000006 1.4L35.400000000000006 13.4" stroke="#f6f6f2" stroke-width="1"/><path d="M42.1 1.4L40.1 13.4" stroke="#96968e" stroke-width="1"/><path d="M43.2 1.4L41.2 13.4" stroke="#f6f6f2" stroke-width="1"/><path d="M18.5 4L23 2L27.5 4V10L23 12.5L18.5 10Z" fill="#f4c020"/><path d="M18.5 4L23 6.5L27.5 4M23 6.5V12.5" stroke="#b8860a" stroke-width=".8" fill="none"/></svg>
<svg class="r" style="left:1507.1px;top:730.6px;" width="4.8" height="4.8" viewBox="0 0 4.8 4.8"><circle cx="2.4" cy="2.4" r="2.4" fill="#bcc0d0"/></svg>
<svg class="r" style="left:1525.6px;top:730.6px;" width="4.8" height="4.8" viewBox="0 0 4.8 4.8"><circle cx="2.4" cy="2.4" r="2.4" fill="#bcc0d0"/></svg>
<svg class="r" style="left:1516.3px;top:751.6px;" width="4.8" height="4.8" viewBox="0 0 4.8 4.8"><circle cx="2.4" cy="2.4" r="2.4" fill="#bcc0d0"/></svg>
<span class="t" style="left:1546.0px;top:736.7px;font-size:9.5px;line-height:11px;color:#c9c9d6;transform:scaleX(0.958);">polybevel1</span>
<svg class="r" style="left:1495.5px;top:780.9px;" width="46.4" height="14.8" viewBox="0 0 46.4 14.8"><rect x="0.6" y="0.6" width="45.199999999999996" height="13.600000000000001" rx="2" fill="#dededa" stroke="#b4b4ae" stroke-width="1.2"/><path d="M6.699999999999999 1.4L4.699999999999999 13.4" stroke="#96968e" stroke-width="1"/><path d="M7.8 1.4L5.8 13.4" stroke="#f6f6f2" stroke-width="1"/><path d="M12.7 1.4L10.7 13.4" stroke="#96968e" stroke-width="1"/><path d="M13.8 1.4L11.799999999999999 13.4" stroke="#f6f6f2" stroke-width="1"/><path d="M18.700000000000003 1.4L16.700000000000003 13.4" stroke="#96968e" stroke-width="1"/><path d="M19.8 1.4L17.8 13.4" stroke="#f6f6f2" stroke-width="1"/><path d="M30.5 1.4L28.5 13.4" stroke="#96968e" stroke-width="1"/><path d="M31.599999999999998 1.4L29.599999999999998 13.4" stroke="#f6f6f2" stroke-width="1"/><path d="M36.300000000000004 1.4L34.300000000000004 13.4" stroke="#96968e" stroke-width="1"/><path d="M37.400000000000006 1.4L35.400000000000006 13.4" stroke="#f6f6f2" stroke-width="1"/><path d="M42.1 1.4L40.1 13.4" stroke="#96968e" stroke-width="1"/><path d="M43.2 1.4L41.2 13.4" stroke="#f6f6f2" stroke-width="1"/><path d="M18.5 4L23 2L27.5 4V10L23 12.5L18.5 10Z" fill="#f4c020"/><path d="M18.5 4L23 6.5L27.5 4M23 6.5V12.5" stroke="#b8860a" stroke-width=".8" fill="none"/></svg>
<svg class="r" style="left:1507.1px;top:775.6999999999999px;" width="4.8" height="4.8" viewBox="0 0 4.8 4.8"><circle cx="2.4" cy="2.4" r="2.4" fill="#bcc0d0"/></svg>
<svg class="r" style="left:1525.6px;top:775.6999999999999px;" width="4.8" height="4.8" viewBox="0 0 4.8 4.8"><circle cx="2.4" cy="2.4" r="2.4" fill="#bcc0d0"/></svg>
<svg class="r" style="left:1516.3px;top:796.6999999999999px;" width="4.8" height="4.8" viewBox="0 0 4.8 4.8"><circle cx="2.4" cy="2.4" r="2.4" fill="#bcc0d0"/></svg>
<span class="t" style="left:1546.0px;top:781.8px;font-size:9.5px;line-height:11px;color:#c9c9d6;transform:scaleX(0.969);">polybevel2</span>
<svg class="r" style="left:1495.5px;top:825.6px;" width="46.4" height="14.8" viewBox="0 0 46.4 14.8"><rect x="0.6" y="0.6" width="45.199999999999996" height="13.600000000000001" rx="2" fill="#dededa" stroke="#b4b4ae" stroke-width="1.2"/><path d="M6.699999999999999 1.4L4.699999999999999 13.4" stroke="#96968e" stroke-width="1"/><path d="M7.8 1.4L5.8 13.4" stroke="#f6f6f2" stroke-width="1"/><path d="M12.7 1.4L10.7 13.4" stroke="#96968e" stroke-width="1"/><path d="M13.8 1.4L11.799999999999999 13.4" stroke="#f6f6f2" stroke-width="1"/><path d="M18.700000000000003 1.4L16.700000000000003 13.4" stroke="#96968e" stroke-width="1"/><path d="M19.8 1.4L17.8 13.4" stroke="#f6f6f2" stroke-width="1"/><path d="M30.5 1.4L28.5 13.4" stroke="#96968e" stroke-width="1"/><path d="M31.599999999999998 1.4L29.599999999999998 13.4" stroke="#f6f6f2" stroke-width="1"/><path d="M36.300000000000004 1.4L34.300000000000004 13.4" stroke="#96968e" stroke-width="1"/><path d="M37.400000000000006 1.4L35.400000000000006 13.4" stroke="#f6f6f2" stroke-width="1"/><path d="M42.1 1.4L40.1 13.4" stroke="#96968e" stroke-width="1"/><path d="M43.2 1.4L41.2 13.4" stroke="#f6f6f2" stroke-width="1"/><ellipse cx="23" cy="7.2" rx="4.2" ry="3" fill="none" stroke="#d05050" stroke-width="1.3"/><ellipse cx="23" cy="7.2" rx="1.6" ry="1" fill="#e8c0c0"/></svg>
<svg class="r" style="left:1507.1px;top:820.4px;" width="4.8" height="4.8" viewBox="0 0 4.8 4.8"><circle cx="2.4" cy="2.4" r="2.4" fill="#bcc0d0"/></svg>
<svg class="r" style="left:1525.6px;top:820.4px;" width="4.8" height="4.8" viewBox="0 0 4.8 4.8"><circle cx="2.4" cy="2.4" r="2.4" fill="#bcc0d0"/></svg>
<svg class="r" style="left:1516.3px;top:841.4px;" width="4.8" height="4.8" viewBox="0 0 4.8 4.8"><circle cx="2.4" cy="2.4" r="2.4" fill="#bcc0d0"/></svg>
<span class="t" style="left:1546.0px;top:826.5px;font-size:9.5px;line-height:11px;color:#c9c9d6;transform:scaleX(0.958);">subdivide1</span>
<svg class="r" style="left:1495.5px;top:869.8000000000001px;" width="46.4" height="14.8" viewBox="0 0 46.4 14.8"><rect x="0.6" y="0.6" width="45.199999999999996" height="13.600000000000001" rx="2" fill="#dededa" stroke="#b4b4ae" stroke-width="1.2"/><path d="M6.699999999999999 1.4L4.699999999999999 13.4" stroke="#96968e" stroke-width="1"/><path d="M7.8 1.4L5.8 13.4" stroke="#f6f6f2" stroke-width="1"/><path d="M12.7 1.4L10.7 13.4" stroke="#96968e" stroke-width="1"/><path d="M13.8 1.4L11.799999999999999 13.4" stroke="#f6f6f2" stroke-width="1"/><path d="M18.700000000000003 1.4L16.700000000000003 13.4" stroke="#96968e" stroke-width="1"/><path d="M19.8 1.4L17.8 13.4" stroke="#f6f6f2" stroke-width="1"/><path d="M30.5 1.4L28.5 13.4" stroke="#96968e" stroke-width="1"/><path d="M31.599999999999998 1.4L29.599999999999998 13.4" stroke="#f6f6f2" stroke-width="1"/><path d="M36.300000000000004 1.4L34.300000000000004 13.4" stroke="#96968e" stroke-width="1"/><path d="M37.400000000000006 1.4L35.400000000000006 13.4" stroke="#f6f6f2" stroke-width="1"/><path d="M42.1 1.4L40.1 13.4" stroke="#96968e" stroke-width="1"/><path d="M43.2 1.4L41.2 13.4" stroke="#f6f6f2" stroke-width="1"/><rect x="19.5" y="4" width="5" height="6" fill="#888"/><rect x="24" y="5.5" width="3.5" height="4.5" fill="#b8b8b0" stroke="#777" stroke-width=".5"/></svg>
<svg class="r" style="left:1507.1px;top:864.6px;" width="4.8" height="4.8" viewBox="0 0 4.8 4.8"><circle cx="2.4" cy="2.4" r="2.4" fill="#bcc0d0"/></svg>
<svg class="r" style="left:1525.6px;top:864.6px;" width="4.8" height="4.8" viewBox="0 0 4.8 4.8"><circle cx="2.4" cy="2.4" r="2.4" fill="#bcc0d0"/></svg>
<svg class="r" style="left:1516.3px;top:885.6px;" width="4.8" height="4.8" viewBox="0 0 4.8 4.8"><circle cx="2.4" cy="2.4" r="2.4" fill="#bcc0d0"/></svg>
<span class="t" style="left:1546.0px;top:870.7px;font-size:9.5px;line-height:11px;color:#c9c9d6;transform:scaleX(0.947);">matchsize1</span>
<span class="t" style="left:1546.0px;top:843.0px;font-size:8.5px;line-height:10px;color:#4f82b0;transform:scaleX(0.965);">Depth: 2</span>
<svg class="r" style="left:1547px;top:883.5px;" width="9" height="8" viewBox="0 0 9 8"><path d="M1 0.5H8A1 1 0 0 1 9 1.5V4.5A1 1 0 0 1 8 5.5H4L1.5 8V5.5H1A1 1 0 0 1 0 4.5V1.5A1 1 0 0 1 1 0.5Z" fill="#23a0aa"/></svg>
<svg class="r" style="left:1558px;top:883px;" width="7" height="8" viewBox="0 0 7 8"><path d="M1.5 3.5V2.5A2 2 0 0 1 5.5 2.5V3.5" fill="none" stroke="#8a8a8a" stroke-width="1"/><rect x=".5" y="3.5" width="6" height="4.5" fill="#8a8a8a"/></svg>
<span class="t" style="left:1546.0px;top:894.0px;font-size:8.5px;line-height:10px;color:#2f98a2;transform:scaleX(0.992);">This moves the cup up to the floor</span>
<svg class="r" style="left:1496.5px;top:911px;" width="44" height="34" viewBox="0 0 44 34"><g transform="translate(22 17)"><rect x="-18" y="-4.6" width="36" height="9.2" rx="4.6" transform="rotate(35)" fill="#e2aaa8" stroke="#e2aaa8" stroke-width="5.6"/><rect x="-18" y="-4.6" width="36" height="9.2" rx="4.6" transform="rotate(-35)" fill="#e2aaa8" stroke="#e2aaa8" stroke-width="5.6"/><rect x="-18" y="-4.6" width="36" height="9.2" rx="4.6" transform="rotate(35)" fill="#1c1c1c" stroke="#1c1c1c" stroke-width="2.6"/><rect x="-18" y="-4.6" width="36" height="9.2" rx="4.6" transform="rotate(-35)" fill="#1c1c1c" stroke="#1c1c1c" stroke-width="2.6"/><rect x="-18" y="-4.6" width="36" height="9.2" rx="4.6" transform="rotate(35)" fill="#a6c4de"/><rect x="-18" y="-4.6" width="36" height="9.2" rx="4.6" transform="rotate(-35)" fill="#a6c4de"/><path d="M-11 -4L-5 4M5 -4L11 4M-11 4L-5 -4M5 4L11 -4" stroke="#c4daec" stroke-width="1"/><circle r="3.6" fill="#c2d8ea" stroke="#8aa8c2" stroke-width=".7"/></g></svg>
<svg class="r" style="left:1516.3px;top:910.6px;" width="4.8" height="4.8" viewBox="0 0 4.8 4.8"><circle cx="2.4" cy="2.4" r="2.4" fill="#bcc0d0"/></svg>
<svg class="r" style="left:1516.3px;top:940.6px;" width="4.8" height="4.8" viewBox="0 0 4.8 4.8"><circle cx="2.4" cy="2.4" r="2.4" fill="#bcc0d0"/></svg>
<span class="t" style="left:1539.0px;top:911.0px;font-size:7.5px;line-height:9px;color:#5a5a5a;transform:scaleX(1.006);">Null</span>
<span class="t" style="left:1538.8px;top:919.8px;font-size:9.5px;line-height:11px;color:#d2d2d8;transform:scaleX(0.870);">CUP_OUT</span>
<svg class="r" style="left:1541px;top:933.5px;" width="9" height="8" viewBox="0 0 9 8"><path d="M1 0.5H8A1 1 0 0 1 9 1.5V4.5A1 1 0 0 1 8 5.5H4L1.5 8V5.5H1A1 1 0 0 1 0 4.5V1.5A1 1 0 0 1 1 0.5Z" fill="#23a0aa"/></svg>
<span class="t" style="left:1538.8px;top:944.0px;font-size:8.5px;line-height:10px;color:#2f98a2;">This is the cup output to display</span>
<span class="t" style="left:1538.8px;top:954.8px;font-size:8.5px;line-height:10px;color:#2f98a2;transform:scaleX(1.023);">entire network.</span>
<!-- timeline -->
<div class="r" style="left:0px;top:1010px;width:1920px;height:70px;background:#343434;"></div>
<div class="r" style="left:0px;top:1010px;width:1920px;height:1px;background:#1e1e1e;"></div>
<div class="r" style="left:0px;top:1011px;width:1920px;height:1px;background:#484848;"></div>
<div class="r" style="left:0px;top:1020px;width:22px;height:29px;background:#464646;box-shadow:inset 0 1px 0 #555,0 0 0 1px #262626;"></div>
<svg class="r" style="left:3px;top:1026px;" width="14" height="16" viewBox="0 0 14 16"><path d="M13 0V16L0 8Z" fill="#e4e4e4"/></svg>
<div class="r" style="left:23.5px;top:1020px;width:27.5px;height:29px;background:#5d7da6;box-shadow:inset 0 0 0 1px #7391ba;"></div>
<div class="r" style="left:31px;top:1027px;width:14px;height:14px;background:#e6e6e0;box-shadow:0 0 0 1px #8a8a8a;"></div>
<div class="r" style="left:52px;top:1020px;width:28px;height:29px;background:#464646;box-shadow:inset 0 1px 0 #555,0 0 0 1px #262626;"></div>
<svg class="r" style="left:62px;top:1026px;" width="12" height="16" viewBox="0 0 12 16"><path d="M0 0V16L12 8Z" fill="#e4e4e4"/></svg>
<div class="r" style="left:81px;top:1020px;width:28.5px;height:29px;background:#464646;box-shadow:inset 0 1px 0 #555,0 0 0 1px #262626;"></div>
<svg class="r" style="left:86px;top:1028.5px;" width="21" height="12" viewBox="0 0 21 12"><path d="M0 0V12L8 6ZM8 0V12L16 6Z" fill="#e4e4e4"/><rect x="17" y="0" width="3" height="12" fill="#e4e4e4"/></svg>
<div class="r" style="left:115px;top:1021px;width:49px;height:27px;background:#181818;"></div>
<span class="t" style="left:118.0px;top:1026.5px;font-size:13px;line-height:16px;color:#e0e0e0;">1</span>
<div class="r" style="left:167px;top:1020px;width:14px;height:29px;background:#464646;box-shadow:inset 0 1px 0 #555,0 0 0 1px #262626;"></div>
<svg class="r" style="left:169.5px;top:1030px;" width="10" height="8" viewBox="0 0 10 8"><path d="M6 0V8L0 4Z" fill="#e4e4e4"/><rect x="7.5" y="0" width="2" height="8" fill="#e4e4e4"/></svg>
<div class="r" style="left:182px;top:1020px;width:14px;height:29px;background:#464646;box-shadow:inset 0 1px 0 #555,0 0 0 1px #262626;"></div>
<svg class="r" style="left:185px;top:1030px;" width="10" height="8" viewBox="0 0 10 8"><rect x="0" y="0" width="2" height="8" fill="#e4e4e4"/><path d="M4 0V8L10 4Z" fill="#e4e4e4"/></svg>
<div class="r" style="left:0px;top:1058px;width:21px;height:26px;background:#464646;box-shadow:inset 0 1px 0 #555,0 0 0 1px #262626;"></div>
<svg class="r" style="left:0px;top:1060px;" width="20" height="22" viewBox="0 0 20 22"><path d="M0 7H4L9 2V20L4 15H0Z" fill="#8a8a8a"/><ellipse cx="9" cy="11" rx="7.5" ry="10" fill="none" stroke="#d8d8d8" stroke-width="1.6"/></svg>
<div class="r" style="left:24px;top:1058px;width:26px;height:26px;background:#464646;box-shadow:inset 0 1px 0 #555,0 0 0 1px #262626;"></div>
<svg class="r" style="left:28px;top:1062px;" width="20" height="18" viewBox="0 0 20 18"><path d="M4 6H12A5 4.5 0 0 1 12 15H2" fill="none" stroke="#e4e4e4" stroke-width="2.2"/><path d="M6 1L0 6L6 11Z" fill="#e4e4e4"/><path d="M1 15H19" stroke="#e4e4e4" stroke-width="2"/><path d="M12 16H19L15.5 19Z" fill="#8a8a8a"/></svg>
<div class="r" style="left:52.5px;top:1058px;width:27.0px;height:26px;background:#5d7da6;box-shadow:inset 0 0 0 1px #7391ba;"></div>
<svg class="r" style="left:56.5px;top:1060.5px;" width="20" height="20" viewBox="0 0 20 20"><circle cx="10" cy="10" r="8.4" fill="#f0f0f0" stroke="#222" stroke-width="1.4"/><path d="M10 4V10H14.5" stroke="#222" stroke-width="1.6" fill="none"/><circle cx="10" cy="10" r="1.2" fill="#222"/></svg>
<div class="r" style="left:81px;top:1058px;width:28px;height:26px;background:#464646;box-shadow:inset 0 1px 0 #555,0 0 0 1px #262626;"></div>
<svg class="r" style="left:87px;top:1067px;" width="20" height="10" viewBox="0 0 20 10"><path d="M1 0V6M5 0V3M9 0V3M13 0V6M17 0V3" stroke="#c0c0c0" stroke-width="1.3"/><path d="M14 6L19 8.5L14 11Z" fill="#7a7a7a" transform="translate(1 -1)"/></svg>
<div class="r" style="left:111px;top:1058px;width:27.5px;height:26px;background:#464646;box-shadow:inset 0 1px 0 #555,0 0 0 1px #262626;"></div>
<svg class="r" style="left:116px;top:1067px;" width="19" height="8" viewBox="0 0 19 8"><path d="M0 4H19" stroke="#c0c0c0" stroke-width="1.2"/><circle cx="11" cy="4" r="2.6" fill="#e0e0e0"/></svg>
<div class="r" style="left:143.5px;top:1060px;width:1px;height:20px;background:#2a2a2a;"></div>
<div class="r" style="left:145px;top:1058px;width:23px;height:26px;background:#3c3c3c;box-shadow:inset 0 1px 0 #555,0 0 0 1px #262626;"></div>
<svg class="r" style="left:152px;top:1066px;" width="9" height="9" viewBox="0 0 9 9"><rect x="0" y="0" width="1.8" height="9" fill="#586058"/><path d="M9 0V9L2.5 4.5Z" fill="#586058"/></svg>
<div class="r" style="left:169.5px;top:1058px;width:23.5px;height:26px;background:#3c3c3c;box-shadow:inset 0 1px 0 #555,0 0 0 1px #262626;"></div>
<svg class="r" style="left:177px;top:1066px;" width="9" height="9" viewBox="0 0 9 9"><rect x="7.2" y="0" width="1.8" height="9" fill="#586058"/><path d="M0 0V9L6.5 4.5Z" fill="#586058"/></svg>
<div class="r" style="left:204px;top:1060px;width:44px;height:22px;background:#282828;"></div>
<span class="t" style="left:208.0px;top:1063.0px;font-size:13px;line-height:16px;color:#e6e6e6;">1</span>
<div class="r" style="left:253.5px;top:1060px;width:44px;height:22px;background:#282828;"></div>
<span class="t" style="left:257.5px;top:1063.0px;font-size:13px;line-height:16px;color:#e6e6e6;">1</span>
<div class="r" style="left:303px;top:1069.5px;width:1350px;height:3.5px;background:#868686;"></div>
<svg class="r" style="left:299.5px;top:1065px;" width="7" height="12" viewBox="0 0 7 12"><path d="M0 0V12L7 6Z" fill="#a0a0a0"/></svg>
<svg class="r" style="left:1650px;top:1065px;" width="8" height="12" viewBox="0 0 8 12"><path d="M8 0V12L0 6Z" fill="#a0a0a0"/></svg>
<div class="r" style="left:1661px;top:1061px;width:43px;height:22px;background:#181818;"></div>
<span class="t" style="left:1664.0px;top:1063.0px;font-size:13px;line-height:16px;color:#e6e6e6;transform:scaleX(0.934);">72</span>
<div class="r" style="left:1709px;top:1061px;width:43.5px;height:22px;background:#181818;"></div>
<span class="t" style="left:1713.0px;top:1063.0px;font-size:13px;line-height:16px;color:#e6e6e6;transform:scaleX(0.934);">72</span>
<svg class="r" style="left:0px;top:1011px;" width="1920" height="40" viewBox="0 1011 1920 40"><path d="M203.5 1036.8H1753.5" stroke="#cfcfcf" stroke-width="1"/><path d="M203.5 1032.5V1041.3" stroke="#bdbdbd" stroke-width="1"/><path d="M225.0 1032.5V1041.3" stroke="#bdbdbd" stroke-width="1"/><path d="M246.6 1032.5V1041.3" stroke="#bdbdbd" stroke-width="1"/><path d="M268.1 1032.5V1041.3" stroke="#bdbdbd" stroke-width="1"/><path d="M289.7 1032.5V1041.3" stroke="#bdbdbd" stroke-width="1"/><path d="M311.2 1032.5V1041.3" stroke="#bdbdbd" stroke-width="1"/><path d="M332.8 1032.5V1041.3" stroke="#bdbdbd" stroke-width="1"/><path d="M354.3 1032.5V1041.3" stroke="#bdbdbd" stroke-width="1"/><path d="M375.9 1032.5V1041.3" stroke="#bdbdbd" stroke-width="1"/><path d="M397.4 1032.5V1041.3" stroke="#bdbdbd" stroke-width="1"/><path d="M419.0 1032.5V1041.3" stroke="#bdbdbd" stroke-width="1"/><path d="M440.5 1028.5V1044.5" stroke="#dcdcdc" stroke-width="1"/><path d="M462.0 1032.5V1041.3" stroke="#bdbdbd" stroke-width="1"/><path d="M483.6 1032.5V1041.3" stroke="#bdbdbd" stroke-width="1"/><path d="M505.1 1032.5V1041.3" stroke="#bdbdbd" stroke-width="1"/><path d="M526.7 1032.5V1041.3" stroke="#bdbdbd" stroke-width="1"/><path d="M548.2 1032.5V1041.3" stroke="#bdbdbd" stroke-width="1"/><path d="M569.8 1032.5V1041.3" stroke="#bdbdbd" stroke-width="1"/><path d="M591.3 1032.5V1041.3" stroke="#bdbdbd" stroke-width="1"/><path d="M612.9 1032.5V1041.3" stroke="#bdbdbd" stroke-width="1"/><path d="M634.4 1032.5V1041.3" stroke="#bdbdbd" stroke-width="1"/><path d="M655.9 1032.5V1041.3" stroke="#bdbdbd" stroke-width="1"/><path d="M677.5 1032.5V1041.3" stroke="#bdbdbd" stroke-width="1"/><path d="M699.0 1028.5V1044.5" stroke="#dcdcdc" stroke-width="1"/><path d="M720.6 1032.5V1041.3" stroke="#bdbdbd" stroke-width="1"/><path d="M742.1 1032.5V1041.3" stroke="#bdbdbd" stroke-width="1"/><path d="M763.7 1032.5V1041.3" stroke="#bdbdbd" stroke-width="1"/><path d="M785.2 1032.5V1041.3" stroke="#bdbdbd" stroke-width="1"/><path d="M806.8 1032.5V1041.3" stroke="#bdbdbd" stroke-width="1"/><path d="M828.3 1032.5V1041.3" stroke="#bdbdbd" stroke-width="1"/><path d="M849.9 1032.5V1041.3" stroke="#bdbdbd" stroke-width="1"/><path d="M871.4 1032.5V1041.3" stroke="#bdbdbd" stroke-width="1"/><path d="M892.9 1032.5V1041.3" stroke="#bdbdbd" stroke-width="1"/><path d="M914.5 1032.5V1041.3" stroke="#bdbdbd" stroke-width="1"/><path d="M936.0 1032.5V1041.3" stroke="#bdbdbd" stroke-width="1"/><path d="M957.6 1028.5V1044.5" stroke="#dcdcdc" stroke-width="1"/><path d="M979.1 1032.5V1041.3" stroke="#bdbdbd" stroke-width="1"/><path d="M1000.7 1032.5V1041.3" stroke="#bdbdbd" stroke-width="1"/><path d="M1022.2 1032.5V1041.3" stroke="#bdbdbd" stroke-width="1"/><path d="M1043.8 1032.5V1041.3" stroke="#bdbdbd" stroke-width="1"/><path d="M1065.3 1032.5V1041.3" stroke="#bdbdbd" stroke-width="1"/><path d="M1086.8 1032.5V1041.3" stroke="#bdbdbd" stroke-width="1"/><path d="M1108.4 1032.5V1041.3" stroke="#bdbdbd" stroke-width="1"/><path d="M1129.9 1032.5V1041.3" stroke="#bdbdbd" stroke-width="1"/><path d="M1151.5 1032.5V1041.3" stroke="#bdbdbd" stroke-width="1"/><path d="M1173.0 1032.5V1041.3" stroke="#bdbdbd" stroke-width="1"/><path d="M1194.6 1032.5V1041.3" stroke="#bdbdbd" stroke-width="1"/><path d="M1216.1 1028.5V1044.5" stroke="#dcdcdc" stroke-width="1"/><path d="M1237.7 1032.5V1041.3" stroke="#bdbdbd" stroke-width="1"/><path d="M1259.2 1032.5V1041.3" stroke="#bdbdbd" stroke-width="1"/><path d="M1280.8 1032.5V1041.3" stroke="#bdbdbd" stroke-width="1"/><path d="M1302.3 1032.5V1041.3" stroke="#bdbdbd" stroke-width="1"/><path d="M1323.8 1032.5V1041.3" stroke="#bdbdbd" stroke-width="1"/><path d="M1345.4 1032.5V1041.3" stroke="#bdbdbd" stroke-width="1"/><path d="M1366.9 1032.5V1041.3" stroke="#bdbdbd" stroke-width="1"/><path d="M1388.5 1032.5V1041.3" stroke="#bdbdbd" stroke-width="1"/><path d="M1410.0 1032.5V1041.3" stroke="#bdbdbd" stroke-width="1"/><path d="M1431.6 1032.5V1041.3" stroke="#bdbdbd" stroke-width="1"/><path d="M1453.1 1032.5V1041.3" stroke="#bdbdbd" stroke-width="1"/><path d="M1474.7 1028.5V1044.5" stroke="#dcdcdc" stroke-width="1"/><path d="M1496.2 1032.5V1041.3" stroke="#bdbdbd" stroke-width="1"/><path d="M1517.7 1032.5V1041.3" stroke="#bdbdbd" stroke-width="1"/><path d="M1539.3 1032.5V1041.3" stroke="#bdbdbd" stroke-width="1"/><path d="M1560.8 1032.5V1041.3" stroke="#bdbdbd" stroke-width="1"/><path d="M1582.4 1032.5V1041.3" stroke="#bdbdbd" stroke-width="1"/><path d="M1603.9 1032.5V1041.3" stroke="#bdbdbd" stroke-width="1"/><path d="M1625.5 1032.5V1041.3" stroke="#bdbdbd" stroke-width="1"/><path d="M1647.0 1032.5V1041.3" stroke="#bdbdbd" stroke-width="1"/><path d="M1668.6 1032.5V1041.3" stroke="#bdbdbd" stroke-width="1"/><path d="M1690.1 1032.5V1041.3" stroke="#bdbdbd" stroke-width="1"/><path d="M1711.7 1032.5V1041.3" stroke="#bdbdbd" stroke-width="1"/><path d="M1733.2 1028.5V1044.5" stroke="#dcdcdc" stroke-width="1"/><path d="M203.5 1037L209 1032" stroke="#f0f0f0" stroke-width="1.2"/></svg>
<span class="t" style="left:246.1px;top:1011.8px;font-size:10.5px;line-height:13px;color:#7c7c7c;transform:scaleX(0.942);">3</span>
<span class="t" style="left:267.6px;top:1011.8px;font-size:10.5px;line-height:13px;color:#7c7c7c;transform:scaleX(0.942);">4</span>
<span class="t" style="left:289.2px;top:1011.8px;font-size:10.5px;line-height:13px;color:#7c7c7c;transform:scaleX(0.942);">5</span>
<span class="t" style="left:310.7px;top:1011.8px;font-size:10.5px;line-height:13px;color:#7c7c7c;transform:scaleX(0.942);">6</span>
<span class="t" style="left:332.3px;top:1011.8px;font-size:10.5px;line-height:13px;color:#7c7c7c;transform:scaleX(0.942);">7</span>
<span class="t" style="left:353.8px;top:1011.8px;font-size:10.5px;line-height:13px;color:#7c7c7c;transform:scaleX(0.942);">8</span>
<span class="t" style="left:375.4px;top:1011.8px;font-size:10.5px;line-height:13px;color:#7c7c7c;transform:scaleX(0.942);">9</span>
<span class="t" style="left:396.9px;top:1011.8px;font-size:10.5px;line-height:13px;color:#7c7c7c;transform:scaleX(0.942);">10</span>
<span class="t" style="left:418.5px;top:1011.8px;font-size:10.5px;line-height:13px;color:#7c7c7c;transform:scaleX(1.009);">11</span>
<span class="t" style="left:440.0px;top:1011.8px;font-size:10.5px;line-height:13px;color:#c8c8c8;transform:scaleX(0.942);">12</span>
<span class="t" style="left:461.5px;top:1011.8px;font-size:10.5px;line-height:13px;color:#7c7c7c;transform:scaleX(0.942);">13</span>
<span class="t" style="left:483.1px;top:1011.8px;font-size:10.5px;line-height:13px;color:#7c7c7c;transform:scaleX(0.942);">14</span>
<span class="t" style="left:504.6px;top:1011.8px;font-size:10.5px;line-height:13px;color:#7c7c7c;transform:scaleX(0.942);">15</span>
<span class="t" style="left:526.2px;top:1011.8px;font-size:10.5px;line-height:13px;color:#7c7c7c;transform:scaleX(0.942);">16</span>
<span class="t" style="left:547.7px;top:1011.8px;font-size:10.5px;line-height:13px;color:#7c7c7c;transform:scaleX(0.942);">17</span>
<span class="t" style="left:569.3px;top:1011.8px;font-size:10.5px;line-height:13px;color:#7c7c7c;transform:scaleX(0.942);">18</span>
<span class="t" style="left:590.8px;top:1011.8px;font-size:10.5px;line-height:13px;color:#7c7c7c;transform:scaleX(0.942);">19</span>
<span class="t" style="left:612.4px;top:1011.8px;font-size:10.5px;line-height:13px;color:#7c7c7c;transform:scaleX(0.942);">20</span>
<span class="t" style="left:633.9px;top:1011.8px;font-size:10.5px;line-height:13px;color:#7c7c7c;transform:scaleX(0.942);">21</span>
<span class="t" style="left:655.4px;top:1011.8px;font-size:10.5px;line-height:13px;color:#7c7c7c;transform:scaleX(0.942);">22</span>
<span class="t" style="left:677.0px;top:1011.8px;font-size:10.5px;line-height:13px;color:#7c7c7c;transform:scaleX(0.942);">23</span>
<span class="t" style="left:698.5px;top:1011.8px;font-size:10.5px;line-height:13px;color:#c8c8c8;transform:scaleX(0.942);">24</span>
<span class="t" style="left:720.1px;top:1011.8px;font-size:10.5px;line-height:13px;color:#7c7c7c;transform:scaleX(0.942);">25</span>
<span class="t" style="left:741.6px;top:1011.8px;font-size:10.5px;line-height:13px;color:#7c7c7c;transform:scaleX(0.942);">26</span>
<span class="t" style="left:763.2px;top:1011.8px;font-size:10.5px;line-height:13px;color:#7c7c7c;transform:scaleX(0.942);">27</span>
<span class="t" style="left:784.7px;top:1011.8px;font-size:10.5px;line-height:13px;color:#7c7c7c;transform:scaleX(0.942);">28</span>
<span class="t" style="left:806.3px;top:1011.8px;font-size:10.5px;line-height:13px;color:#7c7c7c;transform:scaleX(0.942);">29</span>
<span class="t" style="left:827.8px;top:1011.8px;font-size:10.5px;line-height:13px;color:#7c7c7c;transform:scaleX(0.942);">30</span>
<span class="t" style="left:849.4px;top:1011.8px;font-size:10.5px;line-height:13px;color:#7c7c7c;transform:scaleX(0.942);">31</span>
<span class="t" style="left:870.9px;top:1011.8px;font-size:10.5px;line-height:13px;color:#7c7c7c;transform:scaleX(0.942);">32</span>
<span class="t" style="left:892.4px;top:1011.8px;font-size:10.5px;line-height:13px;color:#7c7c7c;transform:scaleX(0.942);">33</span>
<span class="t" style="left:914.0px;top:1011.8px;font-size:10.5px;line-height:13px;color:#7c7c7c;transform:scaleX(0.942);">34</span>
<span class="t" style="left:935.5px;top:1011.8px;font-size:10.5px;line-height:13px;color:#7c7c7c;transform:scaleX(0.942);">35</span>
<span class="t" style="left:957.1px;top:1011.8px;font-size:10.5px;line-height:13px;color:#c8c8c8;transform:scaleX(0.942);">36</span>
<span class="t" style="left:978.6px;top:1011.8px;font-size:10.5px;line-height:13px;color:#7c7c7c;transform:scaleX(0.942);">37</span>
<span class="t" style="left:1000.2px;top:1011.8px;font-size:10.5px;line-height:13px;color:#7c7c7c;transform:scaleX(0.942);">38</span>
<span class="t" style="left:1021.7px;top:1011.8px;font-size:10.5px;line-height:13px;color:#7c7c7c;transform:scaleX(0.942);">39</span>
<span class="t" style="left:1043.3px;top:1011.8px;font-size:10.5px;line-height:13px;color:#7c7c7c;transform:scaleX(0.942);">40</span>
<span class="t" style="left:1064.8px;top:1011.8px;font-size:10.5px;line-height:13px;color:#7c7c7c;transform:scaleX(0.942);">41</span>
<span class="t" style="left:1086.3px;top:1011.8px;font-size:10.5px;line-height:13px;color:#7c7c7c;transform:scaleX(0.942);">42</span>
<span class="t" style="left:1107.9px;top:1011.8px;font-size:10.5px;line-height:13px;color:#7c7c7c;transform:scaleX(0.942);">43</span>
<span class="t" style="left:1129.4px;top:1011.8px;font-size:10.5px;line-height:13px;color:#7c7c7c;transform:scaleX(0.942);">44</span>
<span class="t" style="left:1151.0px;top:1011.8px;font-size:10.5px;line-height:13px;color:#7c7c7c;transform:scaleX(0.942);">45</span>
<span class="t" style="left:1172.5px;top:1011.8px;font-size:10.5px;line-height:13px;color:#7c7c7c;transform:scaleX(0.942);">46</span>
<span class="t" style="left:1194.1px;top:1011.8px;font-size:10.5px;line-height:13px;color:#7c7c7c;transform:scaleX(0.942);">47</span>
<span class="t" style="left:1215.6px;top:1011.8px;font-size:10.5px;line-height:13px;color:#c8c8c8;transform:scaleX(0.942);">48</span>
<span class="t" style="left:1237.2px;top:1011.8px;font-size:10.5px;line-height:13px;color:#7c7c7c;transform:scaleX(0.942);">49</span>
<span class="t" style="left:1258.7px;top:1011.8px;font-size:10.5px;line-height:13px;color:#7c7c7c;transform:scaleX(0.942);">50</span>
<span class="t" style="left:1280.2px;top:1011.8px;font-size:10.5px;line-height:13px;color:#7c7c7c;transform:scaleX(0.942);">51</span>
<span class="t" style="left:1301.8px;top:1011.8px;font-size:10.5px;line-height:13px;color:#7c7c7c;transform:scaleX(0.942);">52</span>
<span class="t" style="left:1323.3px;top:1011.8px;font-size:10.5px;line-height:13px;color:#7c7c7c;transform:scaleX(0.942);">53</span>
<span class="t" style="left:1344.9px;top:1011.8px;font-size:10.5px;line-height:13px;color:#7c7c7c;transform:scaleX(0.942);">54</span>
<span class="t" style="left:1366.4px;top:1011.8px;font-size:10.5px;line-height:13px;color:#7c7c7c;transform:scaleX(0.942);">55</span>
<span class="t" style="left:1388.0px;top:1011.8px;font-size:10.5px;line-height:13px;color:#7c7c7c;transform:scaleX(0.942);">56</span>
<span class="t" style="left:1409.5px;top:1011.8px;font-size:10.5px;line-height:13px;color:#7c7c7c;transform:scaleX(0.942);">57</span>
<span class="t" style="left:1431.1px;top:1011.8px;font-size:10.5px;line-height:13px;color:#7c7c7c;transform:scaleX(0.942);">58</span>
<span class="t" style="left:1452.6px;top:1011.8px;font-size:10.5px;line-height:13px;color:#7c7c7c;transform:scaleX(0.942);">59</span>
<span class="t" style="left:1474.2px;top:1011.8px;font-size:10.5px;line-height:13px;color:#c8c8c8;transform:scaleX(0.942);">60</span>
<span class="t" style="left:1495.7px;top:1011.8px;font-size:10.5px;line-height:13px;color:#7c7c7c;transform:scaleX(0.942);">61</span>
<span class="t" style="left:1517.2px;top:1011.8px;font-size:10.5px;line-height:13px;color:#7c7c7c;transform:scaleX(0.942);">62</span>
<span class="t" style="left:1538.8px;top:1011.8px;font-size:10.5px;line-height:13px;color:#7c7c7c;transform:scaleX(0.942);">63</span>
<span class="t" style="left:1560.3px;top:1011.8px;font-size:10.5px;line-height:13px;color:#7c7c7c;transform:scaleX(0.942);">64</span>
<span class="t" style="left:1581.9px;top:1011.8px;font-size:10.5px;line-height:13px;color:#7c7c7c;transform:scaleX(0.942);">65</span>
<span class="t" style="left:1603.4px;top:1011.8px;font-size:10.5px;line-height:13px;color:#7c7c7c;transform:scaleX(0.942);">66</span>
<span class="t" style="left:1625.0px;top:1011.8px;font-size:10.5px;line-height:13px;color:#7c7c7c;transform:scaleX(0.942);">67</span>
<span class="t" style="left:1646.5px;top:1011.8px;font-size:10.5px;line-height:13px;color:#7c7c7c;transform:scaleX(0.942);">68</span>
<span class="t" style="left:1668.1px;top:1011.8px;font-size:10.5px;line-height:13px;color:#7c7c7c;transform:scaleX(0.942);">69</span>
<span class="t" style="left:1689.6px;top:1011.8px;font-size:10.5px;line-height:13px;color:#7c7c7c;transform:scaleX(0.942);">70</span>
<span class="t" style="left:1711.2px;top:1011.8px;font-size:10.5px;line-height:13px;color:#7c7c7c;transform:scaleX(0.942);">71</span>
<span class="t" style="left:1732.7px;top:1011.8px;font-size:10.5px;line-height:13px;color:#c8c8c8;transform:scaleX(0.942);">72</span>
<div class="r" style="left:203px;top:1014px;width:26.5px;height:18px;background:#0a0a0a;box-shadow:inset 0 0 0 1.2px #f0f0f0;"></div>
<span class="t" style="left:212.4px;top:1015.3px;font-size:13px;line-height:16px;color:#fff;">1</span>
<svg class="r" style="left:1758px;top:1027.5px;" width="42" height="42" viewBox="0 0 42 42"><circle cx="21" cy="21" r="20" fill="#3c3c3c" stroke="#303030" stroke-width="1"/><g transform="rotate(35 21 21)" fill="none" stroke="#686868" stroke-width="2.2"><circle cx="21" cy="14" r="3.6"/><path d="M21 17.6V30M21 25H24.5M21 29H24"/></g></svg>
<div class="r" style="left:1800px;top:1037px;width:16px;height:21px;background:#3f3f3f;box-shadow:0 0 0 1px #2a2a2a;"></div>
<svg class="r" style="left:1804px;top:1044px;" width="8" height="6" viewBox="0 0 8 6"><path d="M0 0H8L4 6Z" fill="#b0b0b0"/></svg>
<div class="r" style="left:1824px;top:1021px;width:24.5px;height:25px;background:#464646;box-shadow:inset 0 1px 0 #555,0 0 0 1px #262626;"></div>
<svg class="r" style="left:1829px;top:1024px;" width="18" height="18" viewBox="0 0 18 18"><rect x="1" y="1" width="13" height="15" fill="#d8d8d8"/><rect x="1" y="4" width="2" height="3" fill="#e03030"/><rect x="1" y="7" width="2" height="3" fill="#30a030"/><rect x="1" y="10" width="2" height="3" fill="#3050e0"/><rect x="1" y="13" width="2" height="3" fill="#e0c030"/><path d="M5 8A4.5 4.5 0 0 1 13 6M13 10A4.5 4.5 0 0 1 5 12" stroke="#fff" stroke-width="2" fill="none"/><path d="M5 8A4.5 4.5 0 0 1 13 6M13 10A4.5 4.5 0 0 1 5 12" stroke="#555" stroke-width="1" fill="none"/><path d="M13 12L18 15L13 18Z" fill="#c0c0c0"/></svg>
<div class="r" style="left:1824px;top:1052px;width:24.5px;height:24.5px;background:#464646;box-shadow:inset 0 1px 0 #555,0 0 0 1px #262626;"></div>
<svg class="r" style="left:1829px;top:1056px;" width="16" height="16" viewBox="0 0 16 16"><rect width="16" height="16" fill="#0a0a0a"/><path d="M0 8C3 0 5 0 8 8S13 16 16 8" stroke="#4a8ae0" stroke-width="1.2" fill="none"/><path d="M0 8C4 11 6 5 9 8S13 9 16 7" stroke="#e8a020" stroke-width="1.2" fill="none"/><path d="M0 8H16" stroke="#e8e8e8" stroke-width=".8"/></svg>
<div class="r" style="left:1855px;top:1021px;width:70px;height:25px;background:#464646;box-shadow:inset 0 1px 0 #555,0 0 0 1px #262626;"></div>
<span class="t" style="left:1874.5px;top:1026.0px;font-size:12px;line-height:14px;color:#d0d0d0;transform:scaleX(0.910);">0 keys, 0/0</span>
<div class="r" style="left:1854px;top:1053px;width:71px;height:23px;background:#464646;box-shadow:inset 0 1px 0 #555,0 0 0 1px #262626;"></div>
<span class="t" style="left:1869.7px;top:1057.6px;font-size:12px;line-height:14px;color:#d0d0d0;transform:scaleX(0.935);">Key All Channels</span>
</body></html>
